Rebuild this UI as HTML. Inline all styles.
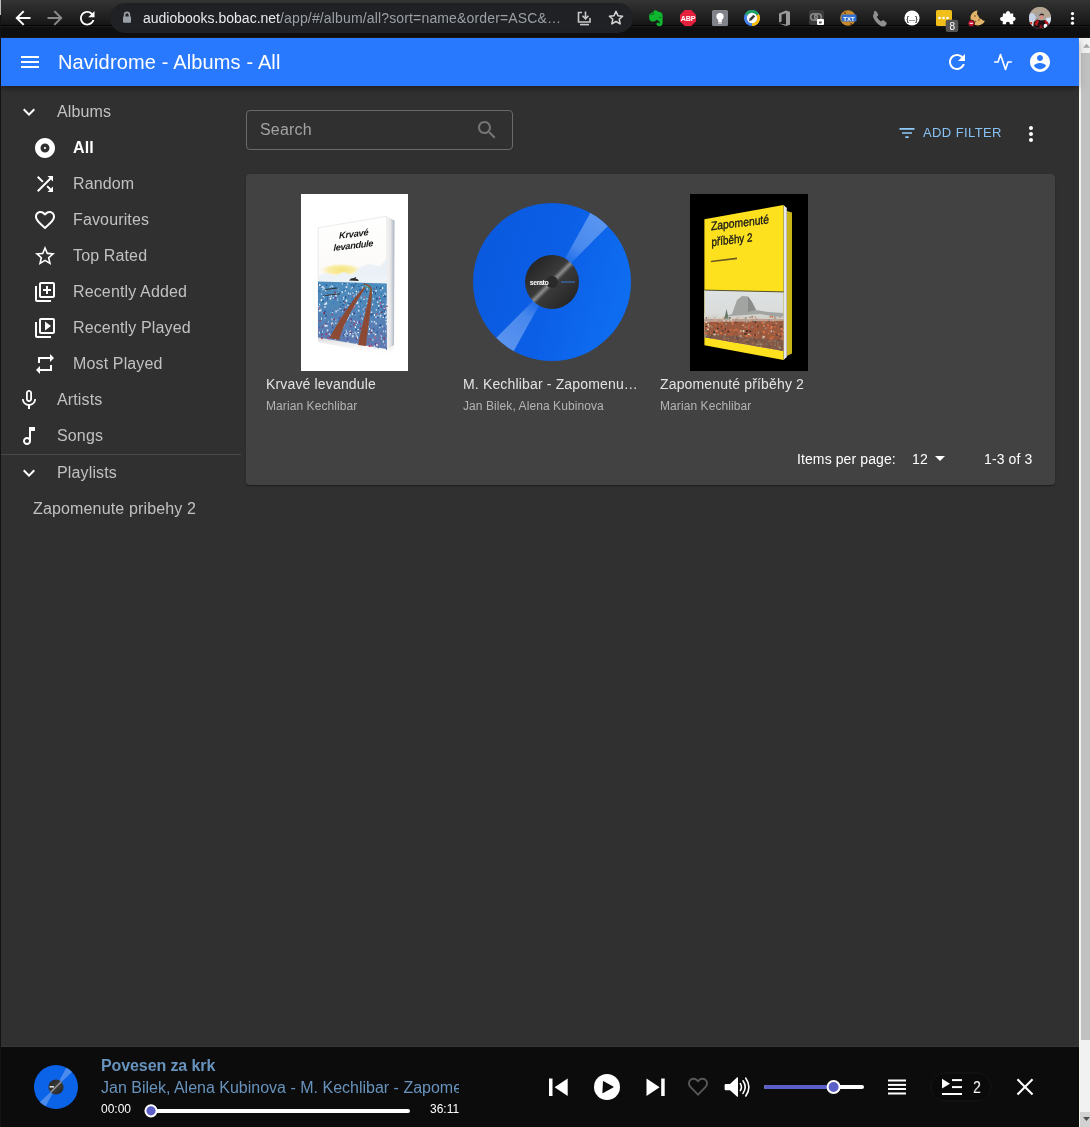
<!DOCTYPE html>
<html><head><meta charset="utf-8">
<style>
*{margin:0;padding:0;box-sizing:border-box}
html,body{width:1090px;height:1127px;overflow:hidden;background:#303030;font-family:"Liberation Sans",sans-serif}
.a{position:absolute}
.t{position:absolute;line-height:1;white-space:nowrap;will-change:transform}
svg{position:absolute;overflow:visible;will-change:transform}
#chrome{left:0;top:0;width:1090px;height:38px;background:linear-gradient(#343434 0px,#161616 25px,#040404 25px,#040404 26px,#1c1c1c 26px,#1c1c1c 27px,#0f0f0f 27px,#0f0f0f 37px,#1c160e 37px,#1c160e 38px)}
#pill{left:110px;top:3px;width:523px;height:30px;border-radius:15px;background:#202124}
#appbar{left:0;top:38px;width:1079px;height:48px;background:#2979ff;box-shadow:0px 2px 4px -1px rgba(0,0,0,0.2),0px 4px 5px 0px rgba(0,0,0,0.14),0px 1px 10px 0px rgba(0,0,0,0.12);z-index:2}
.side{color:#c1c1c1;font-size:16px;letter-spacing:0.14px}
#card{left:246px;top:174px;width:809px;height:311px;background:#424242;border-radius:4px;box-shadow:0px 2px 1px -1px rgba(0,0,0,0.2),0px 1px 1px 0px rgba(0,0,0,0.14),0px 1px 3px 0px rgba(0,0,0,0.12)}
#player{left:0;top:1047px;width:1079px;height:80px;background:#0c0c0c;border-top:0}
#sb{left:1079px;top:38px;width:11px;height:1089px;background:#f1f1f1;border-left:1px solid #fbf8f0}
</style></head><body>
<div id="chrome" class="a"></div>
<div id="pill" class="a"></div>

<!-- chrome toolbar icons -->
<svg style="left:0;top:0" width="1090" height="38" viewBox="0 0 1090 38">
<g fill="none" stroke="#fff" stroke-width="2" stroke-linecap="square">
<path d="M17.5 18H29.5M23 11.8L16.8 18L23 24.2"/>
</g>
<g fill="none" stroke="#8a8a8a" stroke-width="2" stroke-linecap="square">
<path d="M48.5 18H60.5M55 11.8L61.2 18L55 24.2"/>
</g>
<g transform="translate(76.4 7.4) scale(0.906)"><path fill="#fff" d="M17.65 6.35C16.2 4.9 14.21 4 12 4c-4.42 0-7.99 3.58-7.99 8s3.57 8 7.99 8c3.73 0 6.84-2.55 7.73-6h-2.08c-.82 2.33-3.04 4-5.650 4-3.31 0-6-2.690-6-6s2.690-6 6-6c1.66 0 3.14.69 4.22 1.78L13 11h7V4l-2.35 2.35z"/></g>
<!-- lock -->
<path fill="none" stroke="#9aa0a6" stroke-width="1.6" d="M124.6 17V14.8a2.4 2.4 0 0 1 4.8 0V17"/>
<rect x="123" y="16.4" width="8" height="6.4" rx="0.8" fill="#9aa0a6"/>
<!-- install -->
<g fill="none" stroke="#c8c8c8" stroke-width="1.6">
<path d="M582 12.5H578.5V22H590V18"/>
<path d="M585.5 11.5V18.5M582.5 15.8L585.5 18.8L588.5 15.8"/>
<path d="M580 24.6H589"/>
</g>
<!-- star -->
<path fill="none" stroke="#d8d8d8" stroke-width="1.5" stroke-linejoin="round" d="M616 11.4l2 4.3 4.6.5-3.4 3.1 1 4.6-4.2-2.4-4.2 2.4 1-4.6-3.4-3.1 4.6-.5z"/>
<!-- evernote -->
<path fill="#0fb52f" d="M653.5 11.2C654.5 10 656.5 10 657.2 11.2L660.5 12.2C661.8 12.6 662.6 13.8 662.6 15.5L662.6 23C662.6 25.5 660.5 26.3 658.8 26.1C657 25.9 656 24.5 656.6 23.3C657 22.5 658 22.3 658.6 22.8L659.5 23.8C660 23.2 659.8 22 659 21.2L657 19.8C656 20.5 655 21.5 653.5 21.6C651 21.7 649.2 20.5 649.2 18.2L649.2 15.5C649.2 14.5 649.8 13.8 650.5 13.5L652.5 12.6Z"/>
<path d="M650.3 14.6L653.6 14.4L653.2 11.6" fill="none" stroke="#0a5a1a" stroke-width="0.7"/>
<ellipse cx="660.1" cy="17.4" rx="0.8" ry="0.6" fill="#0a5a1a"/>
<!-- ABP -->
<path fill="#e3213f" d="M684.7 10h6.6l4.7 4.7v6.6l-4.7 4.7h-6.6l-4.7-4.7v-6.6z"/>
<text x="688" y="21.3" font-family="Liberation Sans" font-weight="bold" font-size="7.2" fill="#fff" text-anchor="middle" letter-spacing="-0.2">ABP</text>
<!-- lightbulb -->
<rect x="712" y="10" width="16" height="16" rx="1.5" fill="#80848a"/>
<circle cx="720" cy="16.6" r="3.6" fill="#fff"/>
<rect x="718.2" y="19.6" width="3.6" height="2.6" fill="#fff"/>
<rect x="718.2" y="22.6" width="3.6" height="1" fill="#fff"/>
<!-- google pencil -->
<circle cx="752" cy="18" r="6.6" fill="none" stroke="#4285f4" stroke-width="2.8"/>
<path d="M746.28 14.7A6.6 6.6 0 0 1 757.72 14.7" fill="none" stroke="#1ea362" stroke-width="2.8"/>
<path d="M757.72 14.7A6.6 6.6 0 0 1 752 24.6" fill="none" stroke="#fbbc04" stroke-width="2.8"/>
<circle cx="752" cy="18" r="5.2" fill="#fff"/>
<path d="M749 21l.6-2.4 3.8-3.8 1.8 1.8-3.8 3.8z" fill="#3c4043"/>
<!-- office -->
<path fill="#9a9a9a" d="M779 13.5l7-3 4 1.2v13l-4 1.3-7-2.5 7 .9V13.2l-4.4 1.2v7.2l-2.6 1z"/>
<!-- link ext -->
<rect x="809" y="10" width="15" height="15" rx="2" fill="#3a3a3a"/>
<circle cx="814" cy="17" r="3.3" fill="none" stroke="#8a8a8a" stroke-width="1.6"/>
<circle cx="818" cy="17" r="3.3" fill="none" stroke="#8a8a8a" stroke-width="1.6"/>
<rect x="817" y="19" width="7" height="6" rx="1" fill="#fff"/>
<path d="M819 21.5h3.2l-1 2h-2.2z" fill="#555"/>
<!-- cookie txt -->
<circle cx="848" cy="18" r="7.8" fill="#c98a2e"/>
<circle cx="845" cy="13" r="0.9" fill="#6b3f12"/>
<circle cx="851" cy="24" r="0.9" fill="#6b3f12"/>
<rect x="841.5" y="14.6" width="15" height="7" rx="1" fill="#2f6fcf"/>
<text x="849" y="20.6" font-family="Liberation Sans" font-weight="bold" font-size="6" fill="#fff" text-anchor="middle">TXT</text>
<!-- phone -->
<path fill="#8f8f8f" d="M874 11.5c.8-.8 1.8-.7 2.4.1l1.6 2.3c.5.7.3 1.5-.3 2l-.9.7c.6 1.8 2.4 4 4.3 4.9l.8-.8c.6-.6 1.4-.6 2-.1l2.2 1.7c.8.6.8 1.7.1 2.4l-1 1c-1 1-2.6 1.2-4.2.4-3.2-1.6-6.4-5-7.7-8.5-.5-1.5-.3-2.9.6-3.8z"/>
<!-- {..} -->
<circle cx="912" cy="18" r="7.6" fill="#fff"/>
<text x="912" y="20.5" font-family="Liberation Sans" font-weight="bold" font-size="7" fill="#3a3a3a" text-anchor="middle">{...}</text>
<!-- yellow box + badge -->
<rect x="936" y="10" width="16" height="16" rx="1.5" fill="#f0bf1a"/>
<circle cx="939.5" cy="18" r="1.3" fill="#fff"/><circle cx="943.5" cy="18" r="1.3" fill="#fff"/><circle cx="947.5" cy="18" r="1.3" fill="#fff"/>
<rect x="945.7" y="19.8" width="12.5" height="12.2" rx="2" fill="#555"/>
<text x="952.2" y="30" font-family="Liberation Sans" font-size="10" fill="#fff" text-anchor="middle">8</text>
<!-- cookie w/ red -->
<path fill="#e3b56a" d="M977.5 10.5c-4 .3-7 3.6-7 7.5 0 4.1 3.4 7.5 7.5 7.5 3.1 0 5.8-2 6.9-4.7-1.3.1-2.8-.6-3.4-1.8-1.6-.1-3-1.5-3-3.2-1.3-.5-2-1.9-1-5.3z"/>
<circle cx="975" cy="16" r="0.8" fill="#7a4a1c"/><circle cx="979" cy="20" r="0.8" fill="#7a4a1c"/><circle cx="975.5" cy="21.5" r="0.8" fill="#7a4a1c"/>
<circle cx="971.3" cy="23.3" r="3.3" fill="#c8102e" stroke="#1a1a1a" stroke-width="0.8"/>
<rect x="969.6" y="22.8" width="3.4" height="1" fill="#fff"/>
<!-- puzzle -->
<path fill="#fff" d="M1003 13.5h3c0-1.6.9-2.5 2.1-2.5s2.1.9 2.1 2.5h3v3.2c1.6 0 2.4.9 2.4 2.1s-.8 2.1-2.4 2.1v3.3h-3.3c0-1.6-.8-2.4-2-2.4s-2 .8-2 2.4h-3.2v-3.2c-1.6 0-2.6-.9-2.6-2.1s1-2.1 2.6-2.1z"/>
<!-- avatar -->
<defs><clipPath id="av"><circle cx="1040" cy="18" r="11"/></clipPath></defs>
<g clip-path="url(#av)">
<rect x="1028" y="6" width="24" height="24" fill="#a8a4a0"/>
<path d="M1028 6H1052V19L1046 18L1040 12L1032 13L1028 16z" fill="#b4a492"/>
<path d="M1028 14L1033 13L1036 17L1034 22L1028 24z" fill="#c4d0e4"/>
<path d="M1046 18L1052 17V26L1047 24z" fill="#d4e2f2"/>
<path d="M1028 22L1032 21L1033 26L1028 27z" fill="#e8e8ec"/>
<path d="M1033 30L1034 22L1037 19.5L1041 20.5L1045 20L1048.5 23L1049 30z" fill="#1e1214"/>
<path d="M1034.5 24L1037 19.5L1039 21L1037 26z" fill="#c01820"/>
<path d="M1044 20.5L1047 21L1049 25L1046 24z" fill="#c8141c"/>
<path d="M1039 28L1041 24L1043 28z" fill="#8a1218"/>
<ellipse cx="1041.5" cy="17.2" rx="2.2" ry="2.6" fill="#d49282"/>
<path d="M1039.2 16C1039.2 13 1044 12.5 1044.2 15.8C1043 14.8 1040.5 14.8 1039.2 16z" fill="#2a2224"/>
<ellipse cx="1045.5" cy="26" rx="2" ry="2.2" fill="#f0f0f4"/>
<rect x="1030" y="22" width="2" height="2.5" fill="#d83020"/>
</g>
<!-- kebab -->
<circle cx="1072.5" cy="13.6" r="1.6" fill="#fff"/><circle cx="1072.5" cy="18.4" r="1.6" fill="#fff"/><circle cx="1072.5" cy="23.2" r="1.6" fill="#fff"/>
</svg>

<div class="t" style="left:143px;top:11px;font-size:14px;color:#e8eaed">audiobooks.bobac.net<span style="color:#9aa0a6;letter-spacing:0.15px">/app/#/album/all?sort=name&amp;order=ASC&amp;…</span></div>

<div id="appbar" class="a">
<div class="t" style="left:58.3px;top:14px;font-size:20px;color:#fff;letter-spacing:0.15px">Navidrome - Albums - All</div>
</div>

<!-- sidebar -->
<div class="t side" style="left:57px;top:103.5px">Albums</div>
<div class="t side" style="left:73px;top:139.5px;color:#fff;font-weight:bold">All</div>
<div class="t side" style="left:73px;top:175.5px">Random</div>
<div class="t side" style="left:73px;top:211.5px">Favourites</div>
<div class="t side" style="left:73px;top:247.5px">Top Rated</div>
<div class="t side" style="left:73px;top:283.5px">Recently Added</div>
<div class="t side" style="left:73px;top:319.5px">Recently Played</div>
<div class="t side" style="left:73px;top:355.5px">Most Played</div>
<div class="t side" style="left:57px;top:391.5px">Artists</div>
<div class="t side" style="left:57px;top:427.5px">Songs</div>
<div class="a" style="left:0;top:454px;width:241px;height:1px;background:#494949"></div>
<div class="t side" style="left:57px;top:464.5px">Playlists</div>
<div class="t side" style="left:33px;top:500.5px;letter-spacing:0.15px">Zapomenute pribehy 2</div>

<!-- search -->
<div class="a" style="left:246px;top:110px;width:267px;height:40px;border:1px solid #6a6a6a;border-radius:4px"></div>
<div class="t" style="left:260px;top:122.3px;font-size:16px;color:#a3a3a3;letter-spacing:0.2px">Search</div>
<div class="t" style="left:923.2px;top:126.2px;font-size:13px;color:#88c2f5;letter-spacing:0.4px">ADD FILTER</div>

<div id="card" class="a"></div>

<!-- covers -->
<svg style="left:301px;top:194px" width="107" height="177" viewBox="301 194 107 177">
<defs>
<linearGradient id="sky1" x1="0" y1="0" x2="0" y2="1">
<stop offset="0" stop-color="#ffffff"/><stop offset="1" stop-color="#f6f4ee"/>
</linearGradient>
<linearGradient id="fld1" x1="0" y1="0" x2="0" y2="1">
<stop offset="0" stop-color="#4a8cbc"/><stop offset="0.35" stop-color="#4f86b8"/><stop offset="1" stop-color="#6078b0"/>
</linearGradient>
<linearGradient id="spine1" x1="0" y1="0" x2="1" y2="0"><stop offset="0" stop-color="#f7f7f7"/><stop offset="0.5" stop-color="#e4e4e6"/><stop offset="1" stop-color="#a8b4c0"/></linearGradient>
<radialGradient id="sun1" cx="0.5" cy="0.5" r="0.5"><stop offset="0" stop-color="#f7e47a"/><stop offset="0.6" stop-color="#f9eca8"/><stop offset="1" stop-color="#fbf6e0" stop-opacity="0"/></radialGradient>
<linearGradient id="shd1" x1="0" y1="0" x2="0" y2="1"><stop offset="0" stop-color="#d8d8d8"/><stop offset="1" stop-color="#fff" stop-opacity="0"/></linearGradient>
</defs>
<rect x="301" y="194" width="107" height="177" fill="#fff"/>
<path d="M318 337.5L386.8 349L394 345L394 352L386 356L318 342z" fill="url(#shd1)"/>
<path d="M386.8 216.3L394.5 220.5L394 345L386.8 349.5z" fill="url(#spine1)"/>
<path d="M318.2 227.8L386.8 216.3L386.8 349L318 337.5z" fill="url(#sky1)" stroke="#d6d6d6" stroke-width="0.5"/>
<ellipse cx="341" cy="270" rx="22" ry="7" fill="url(#sun1)"/>
<path d="M318.2 276L326 273L334 276L344 272L352 275L362 266L372 270L386.8 262V284L318.2 283z" fill="#edf2f7"/>
<path d="M360 268L368 264L380 266L386.8 258V276L360 278z" fill="#eaf0f6" opacity="0.9"/>
<path d="M318 281.6L386.8 283.4L386.8 349L318 337.5z" fill="url(#fld1)"/>
<rect x="340.3" y="292.1" width="1.5" height="0.9" fill="#2a5a9a"/>
<rect x="358.1" y="343.0" width="1.1" height="0.9" fill="#dfe8f2"/>
<rect x="324.2" y="310.4" width="1.6" height="1.7" fill="#2a5a9a"/>
<rect x="358.1" y="286.1" width="1.6" height="0.9" fill="#2a5a9a"/>
<rect x="377.1" y="301.4" width="1.3" height="1.6" fill="#dfe8f2"/>
<rect x="364.9" y="288.9" width="1.1" height="1.6" fill="#1e4a86"/>
<rect x="322.3" y="286.0" width="1.2" height="1.9" fill="#f4f6fa"/>
<rect x="342.9" y="298.6" width="0.9" height="1.2" fill="#dfe8f2"/>
<rect x="352.1" y="305.0" width="1.6" height="1.0" fill="#f4f6fa"/>
<rect x="346.8" y="332.7" width="1.1" height="2.1" fill="#c8d8ea"/>
<rect x="323.3" y="319.4" width="1.1" height="1.3" fill="#5a9ad0"/>
<rect x="352.2" y="335.4" width="1.6" height="1.5" fill="#dfe8f2"/>
<rect x="363.7" y="286.1" width="1.0" height="1.3" fill="#3a80b8"/>
<rect x="364.0" y="283.5" width="1.3" height="1.5" fill="#1e4a86"/>
<rect x="333.0" y="301.3" width="1.1" height="2.0" fill="#3a80b8"/>
<rect x="323.5" y="312.1" width="1.5" height="2.0" fill="#8a2a4a"/>
<rect x="337.2" y="309.8" width="1.6" height="1.0" fill="#c8d8ea"/>
<rect x="330.1" y="297.5" width="1.5" height="1.1" fill="#c8d8ea"/>
<rect x="337.4" y="291.8" width="1.6" height="1.8" fill="#5a9ad0"/>
<rect x="353.5" y="323.4" width="1.2" height="2.0" fill="#b0345a"/>
<rect x="383.5" y="327.6" width="1.1" height="0.9" fill="#6a3a8a"/>
<rect x="361.6" y="286.2" width="1.2" height="1.0" fill="#dfe8f2"/>
<rect x="359.3" y="288.9" width="1.6" height="1.7" fill="#2a5a9a"/>
<rect x="322.8" y="295.9" width="1.0" height="1.3" fill="#f4f6fa"/>
<rect x="343.1" y="290.2" width="1.2" height="1.2" fill="#3a80b8"/>
<rect x="327.9" y="332.2" width="1.5" height="1.0" fill="#6a3a8a"/>
<rect x="354.3" y="291.8" width="1.4" height="1.2" fill="#2a5a9a"/>
<rect x="362.2" y="288.1" width="1.5" height="1.3" fill="#5a9ad0"/>
<rect x="333.3" y="318.3" width="1.3" height="1.9" fill="#8a2a4a"/>
<rect x="370.2" y="295.1" width="1.4" height="1.1" fill="#c8d8ea"/>
<rect x="353.6" y="305.8" width="1.4" height="1.5" fill="#dfe8f2"/>
<rect x="331.3" y="322.5" width="1.6" height="2.1" fill="#f4f6fa"/>
<rect x="343.1" y="296.8" width="1.1" height="1.5" fill="#dfe8f2"/>
<rect x="385.8" y="322.9" width="1.1" height="1.7" fill="#f4f6fa"/>
<rect x="375.4" y="290.0" width="1.4" height="1.5" fill="#f4f6fa"/>
<rect x="330.3" y="334.9" width="1.1" height="1.4" fill="#f4f6fa"/>
<rect x="383.1" y="330.6" width="0.8" height="1.6" fill="#dfe8f2"/>
<rect x="350.0" y="325.9" width="1.3" height="1.3" fill="#6a3a8a"/>
<rect x="355.7" y="290.8" width="1.3" height="1.5" fill="#f4f6fa"/>
<rect x="382.2" y="311.1" width="0.8" height="1.1" fill="#1e4a86"/>
<rect x="352.5" y="333.2" width="1.1" height="1.0" fill="#f4f6fa"/>
<rect x="380.6" y="305.7" width="1.5" height="2.0" fill="#6a3a8a"/>
<rect x="327.0" y="292.2" width="1.4" height="1.7" fill="#3a80b8"/>
<rect x="371.4" y="292.0" width="1.4" height="1.6" fill="#f4f6fa"/>
<rect x="340.4" y="316.7" width="1.5" height="0.9" fill="#b0345a"/>
<rect x="331.2" y="284.8" width="1.2" height="1.9" fill="#c8d8ea"/>
<rect x="380.8" y="311.7" width="1.4" height="1.4" fill="#8a2a4a"/>
<rect x="354.7" y="314.0" width="1.5" height="2.0" fill="#5a9ad0"/>
<rect x="331.9" y="312.0" width="1.2" height="0.9" fill="#c8d8ea"/>
<rect x="334.6" y="286.9" width="1.5" height="1.0" fill="#2a5a9a"/>
<rect x="367.3" y="326.2" width="1.6" height="1.1" fill="#dfe8f2"/>
<rect x="383.5" y="308.7" width="0.9" height="1.4" fill="#8a2a4a"/>
<rect x="353.5" y="304.7" width="0.9" height="1.3" fill="#c8d8ea"/>
<rect x="341.3" y="312.7" width="1.1" height="1.7" fill="#3a80b8"/>
<rect x="353.2" y="286.3" width="1.6" height="0.9" fill="#1e4a86"/>
<rect x="336.3" y="284.7" width="1.4" height="1.9" fill="#5a9ad0"/>
<rect x="376.5" y="327.3" width="0.9" height="2.1" fill="#3a80b8"/>
<rect x="357.3" y="328.9" width="1.4" height="1.1" fill="#dfe8f2"/>
<rect x="379.6" y="300.0" width="1.4" height="0.9" fill="#dfe8f2"/>
<rect x="376.9" y="286.5" width="0.8" height="2.2" fill="#3a80b8"/>
<rect x="360.8" y="284.9" width="1.6" height="1.2" fill="#2a5a9a"/>
<rect x="361.3" y="317.6" width="1.2" height="1.0" fill="#c8d8ea"/>
<rect x="341.9" y="283.2" width="0.8" height="1.5" fill="#dfe8f2"/>
<rect x="385.3" y="316.5" width="0.9" height="1.9" fill="#c8d8ea"/>
<rect x="347.7" y="315.2" width="1.6" height="1.2" fill="#3a80b8"/>
<rect x="332.8" y="297.4" width="1.4" height="1.0" fill="#f4f6fa"/>
<rect x="386.1" y="347.8" width="0.9" height="1.8" fill="#2a5a9a"/>
<rect x="335.6" y="292.9" width="1.5" height="1.7" fill="#c8d8ea"/>
<rect x="337.4" y="298.2" width="0.9" height="1.2" fill="#c8d8ea"/>
<rect x="318.2" y="306.4" width="1.1" height="0.8" fill="#f4f6fa"/>
<rect x="378.7" y="296.6" width="1.1" height="1.5" fill="#c8d8ea"/>
<rect x="352.6" y="295.5" width="0.9" height="1.9" fill="#b0345a"/>
<rect x="327.9" y="321.3" width="1.0" height="1.1" fill="#c8d8ea"/>
<rect x="358.3" y="317.5" width="1.4" height="1.8" fill="#3a80b8"/>
<rect x="352.0" y="301.0" width="0.8" height="2.0" fill="#1e4a86"/>
<rect x="379.4" y="324.0" width="1.5" height="1.9" fill="#1e4a86"/>
<rect x="357.1" y="336.5" width="1.3" height="2.0" fill="#f4f6fa"/>
<rect x="365.0" y="328.5" width="0.8" height="1.7" fill="#dfe8f2"/>
<rect x="384.0" y="307.2" width="1.3" height="1.7" fill="#b0345a"/>
<rect x="364.8" y="314.8" width="1.4" height="1.5" fill="#dfe8f2"/>
<rect x="354.8" y="326.2" width="1.2" height="1.9" fill="#f4f6fa"/>
<rect x="376.2" y="297.7" width="1.4" height="2.2" fill="#1e4a86"/>
<rect x="352.0" y="307.6" width="1.4" height="1.7" fill="#c85a7a"/>
<rect x="362.2" y="287.2" width="1.3" height="1.8" fill="#c8d8ea"/>
<rect x="360.7" y="290.9" width="1.0" height="1.7" fill="#6a3a8a"/>
<rect x="365.6" y="327.3" width="1.0" height="1.5" fill="#f4f6fa"/>
<rect x="355.8" y="302.9" width="0.8" height="1.4" fill="#c8d8ea"/>
<rect x="374.4" y="346.9" width="1.1" height="2.1" fill="#c8d8ea"/>
<rect x="382.0" y="287.0" width="1.2" height="2.1" fill="#f4f6fa"/>
<rect x="327.1" y="337.0" width="1.4" height="1.1" fill="#b0345a"/>
<rect x="379.8" y="314.6" width="1.6" height="1.8" fill="#dfe8f2"/>
<rect x="345.9" y="330.7" width="1.1" height="2.0" fill="#c8d8ea"/>
<rect x="318.1" y="332.3" width="1.6" height="1.1" fill="#2a5a9a"/>
<rect x="318.8" y="331.6" width="1.1" height="2.2" fill="#dfe8f2"/>
<rect x="358.5" y="306.2" width="1.5" height="1.2" fill="#c8d8ea"/>
<rect x="321.6" y="326.4" width="1.0" height="1.2" fill="#8a2a4a"/>
<rect x="353.2" y="294.7" width="1.5" height="1.9" fill="#c8d8ea"/>
<rect x="361.4" y="343.2" width="1.4" height="0.9" fill="#1e4a86"/>
<rect x="368.4" y="312.2" width="1.2" height="2.1" fill="#5a9ad0"/>
<rect x="355.8" y="293.4" width="1.0" height="1.8" fill="#c8d8ea"/>
<rect x="385.2" y="299.4" width="1.2" height="1.7" fill="#5a9ad0"/>
<rect x="326.2" y="325.1" width="1.5" height="1.5" fill="#f4f6fa"/>
<rect x="386.6" y="312.1" width="1.0" height="1.0" fill="#dfe8f2"/>
<rect x="356.2" y="303.4" width="1.0" height="0.8" fill="#f4f6fa"/>
<rect x="377.9" y="307.7" width="1.1" height="1.3" fill="#1e4a86"/>
<rect x="322.3" y="300.6" width="1.3" height="1.5" fill="#1e4a86"/>
<rect x="372.4" y="338.9" width="1.1" height="1.7" fill="#dfe8f2"/>
<rect x="347.7" y="302.9" width="0.9" height="1.4" fill="#2a5a9a"/>
<rect x="370.5" y="335.9" width="0.8" height="1.3" fill="#3a80b8"/>
<rect x="381.8" y="337.3" width="1.0" height="1.0" fill="#3a80b8"/>
<rect x="328.6" y="317.0" width="0.9" height="1.9" fill="#3a80b8"/>
<rect x="318.1" y="290.4" width="1.3" height="1.2" fill="#2a5a9a"/>
<rect x="326.8" y="298.9" width="0.9" height="1.2" fill="#2a5a9a"/>
<rect x="382.9" y="294.8" width="0.8" height="1.6" fill="#f4f6fa"/>
<rect x="386.6" y="300.7" width="1.2" height="1.1" fill="#dfe8f2"/>
<rect x="366.5" y="302.6" width="1.5" height="1.7" fill="#c8d8ea"/>
<rect x="323.6" y="297.3" width="1.0" height="0.8" fill="#c8d8ea"/>
<rect x="341.3" y="310.2" width="0.8" height="1.2" fill="#1e4a86"/>
<rect x="376.1" y="286.5" width="1.0" height="1.9" fill="#1e4a86"/>
<rect x="333.9" y="296.8" width="0.9" height="1.7" fill="#5a9ad0"/>
<rect x="360.0" y="342.1" width="1.6" height="1.0" fill="#b0345a"/>
<rect x="345.1" y="296.3" width="1.1" height="1.8" fill="#1e4a86"/>
<rect x="330.7" y="312.1" width="1.4" height="2.2" fill="#5a9ad0"/>
<rect x="382.1" y="304.1" width="1.4" height="0.8" fill="#f4f6fa"/>
<rect x="363.7" y="307.4" width="1.2" height="1.0" fill="#c8d8ea"/>
<rect x="323.4" y="287.4" width="1.2" height="1.9" fill="#dfe8f2"/>
<rect x="344.2" y="333.5" width="0.9" height="1.8" fill="#c8d8ea"/>
<rect x="331.5" y="318.3" width="1.1" height="2.1" fill="#c8d8ea"/>
<rect x="320.1" y="309.5" width="0.8" height="0.8" fill="#3a80b8"/>
<rect x="335.7" y="332.1" width="1.1" height="1.3" fill="#5a9ad0"/>
<rect x="383.6" y="284.9" width="1.5" height="1.2" fill="#5a9ad0"/>
<rect x="367.6" y="321.9" width="0.8" height="1.1" fill="#2a5a9a"/>
<rect x="383.6" y="307.9" width="1.5" height="1.0" fill="#c8d8ea"/>
<rect x="382.1" y="302.3" width="1.3" height="1.3" fill="#1e4a86"/>
<rect x="340.0" y="306.2" width="1.2" height="1.3" fill="#2a5a9a"/>
<rect x="329.0" y="309.3" width="1.2" height="1.3" fill="#3a80b8"/>
<rect x="385.4" y="341.2" width="1.3" height="1.1" fill="#5a9ad0"/>
<rect x="384.9" y="293.6" width="1.3" height="1.7" fill="#c8d8ea"/>
<rect x="369.5" y="338.7" width="1.4" height="1.2" fill="#b0345a"/>
<rect x="337.2" y="299.9" width="1.0" height="1.1" fill="#c8d8ea"/>
<rect x="334.9" y="292.3" width="1.1" height="1.4" fill="#1e4a86"/>
<rect x="386.3" y="316.0" width="1.3" height="2.2" fill="#dfe8f2"/>
<rect x="325.0" y="313.8" width="1.5" height="0.9" fill="#3a80b8"/>
<rect x="338.2" y="290.0" width="1.0" height="0.9" fill="#f4f6fa"/>
<rect x="353.3" y="293.9" width="0.9" height="1.6" fill="#2a5a9a"/>
<rect x="360.7" y="296.6" width="0.8" height="2.2" fill="#dfe8f2"/>
<rect x="320.6" y="331.1" width="1.5" height="1.4" fill="#2a5a9a"/>
<rect x="343.6" y="323.6" width="1.4" height="1.6" fill="#dfe8f2"/>
<rect x="322.4" y="288.8" width="0.9" height="1.5" fill="#f4f6fa"/>
<rect x="362.9" y="308.7" width="1.3" height="1.4" fill="#c8d8ea"/>
<rect x="321.5" y="331.9" width="1.1" height="2.0" fill="#3a80b8"/>
<rect x="386.6" y="306.4" width="1.1" height="2.1" fill="#f4f6fa"/>
<rect x="347.9" y="292.5" width="1.1" height="2.0" fill="#dfe8f2"/>
<rect x="349.7" y="292.9" width="0.9" height="1.9" fill="#f4f6fa"/>
<rect x="345.3" y="320.4" width="0.9" height="1.2" fill="#1e4a86"/>
<rect x="325.5" y="314.9" width="1.0" height="2.0" fill="#1e4a86"/>
<rect x="339.6" y="322.7" width="1.5" height="1.7" fill="#b0345a"/>
<rect x="374.7" y="292.7" width="1.3" height="1.7" fill="#1e4a86"/>
<rect x="331.5" y="313.7" width="1.1" height="1.5" fill="#b0345a"/>
<rect x="344.4" y="290.2" width="1.5" height="1.1" fill="#f4f6fa"/>
<rect x="378.8" y="338.4" width="0.9" height="1.6" fill="#c85a7a"/>
<rect x="355.8" y="324.0" width="1.0" height="1.1" fill="#c8d8ea"/>
<rect x="344.8" y="306.6" width="0.8" height="1.7" fill="#8a2a4a"/>
<rect x="351.7" y="297.8" width="1.5" height="1.9" fill="#3a80b8"/>
<rect x="345.5" y="286.5" width="0.9" height="1.4" fill="#c8d8ea"/>
<rect x="353.1" y="284.7" width="1.5" height="1.2" fill="#2a5a9a"/>
<rect x="367.6" y="287.4" width="1.3" height="1.9" fill="#3a80b8"/>
<rect x="319.8" y="286.4" width="1.0" height="2.2" fill="#2a5a9a"/>
<rect x="381.0" y="293.1" width="0.9" height="1.3" fill="#1e4a86"/>
<rect x="370.0" y="292.6" width="1.5" height="1.4" fill="#5a9ad0"/>
<rect x="351.0" y="321.7" width="1.1" height="0.9" fill="#8a2a4a"/>
<rect x="330.5" y="292.8" width="1.5" height="1.0" fill="#5a9ad0"/>
<rect x="372.0" y="289.7" width="1.6" height="1.4" fill="#5a9ad0"/>
<rect x="353.9" y="328.1" width="1.6" height="1.7" fill="#5a9ad0"/>
<rect x="345.1" y="335.4" width="1.3" height="1.3" fill="#c8d8ea"/>
<rect x="370.6" y="311.6" width="1.6" height="1.2" fill="#f4f6fa"/>
<rect x="353.5" y="302.8" width="1.4" height="1.8" fill="#5a9ad0"/>
<rect x="333.2" y="301.5" width="1.2" height="2.1" fill="#3a80b8"/>
<rect x="327.1" y="297.2" width="0.8" height="1.6" fill="#2a5a9a"/>
<rect x="338.9" y="317.0" width="1.3" height="1.6" fill="#6a3a8a"/>
<rect x="332.0" y="323.8" width="0.8" height="1.9" fill="#8a2a4a"/>
<rect x="366.7" y="312.2" width="1.5" height="1.9" fill="#dfe8f2"/>
<rect x="345.7" y="299.7" width="1.5" height="2.0" fill="#f4f6fa"/>
<rect x="358.9" y="320.8" width="1.0" height="2.1" fill="#6a3a8a"/>
<rect x="321.0" y="317.6" width="0.9" height="2.1" fill="#dfe8f2"/>
<rect x="325.2" y="323.0" width="0.9" height="1.1" fill="#8a2a4a"/>
<rect x="359.8" y="316.0" width="1.2" height="0.9" fill="#8a2a4a"/>
<rect x="367.8" y="314.0" width="1.5" height="1.8" fill="#6a3a8a"/>
<rect x="350.0" y="331.7" width="1.6" height="1.2" fill="#8a2a4a"/>
<rect x="362.3" y="290.3" width="1.4" height="1.2" fill="#5a9ad0"/>
<rect x="356.1" y="311.2" width="1.0" height="2.1" fill="#5a9ad0"/>
<rect x="379.5" y="287.7" width="1.0" height="1.1" fill="#1e4a86"/>
<rect x="369.2" y="345.3" width="1.0" height="1.3" fill="#c85a7a"/>
<rect x="359.4" y="307.4" width="1.2" height="1.5" fill="#3a80b8"/>
<rect x="318.4" y="283.8" width="1.3" height="1.2" fill="#1e4a86"/>
<rect x="332.6" y="323.7" width="0.9" height="0.8" fill="#dfe8f2"/>
<rect x="341.7" y="291.5" width="0.9" height="1.7" fill="#dfe8f2"/>
<rect x="320.9" y="286.5" width="1.4" height="1.1" fill="#f4f6fa"/>
<rect x="383.7" y="317.8" width="0.9" height="1.1" fill="#3a80b8"/>
<rect x="325.7" y="284.3" width="1.5" height="1.7" fill="#2a5a9a"/>
<rect x="337.8" y="288.7" width="1.0" height="1.2" fill="#f4f6fa"/>
<rect x="347.2" y="283.4" width="0.8" height="1.9" fill="#c8d8ea"/>
<rect x="380.6" y="333.5" width="1.5" height="1.7" fill="#6a3a8a"/>
<rect x="320.1" y="309.7" width="1.1" height="1.8" fill="#dfe8f2"/>
<rect x="355.0" y="296.5" width="1.3" height="1.2" fill="#2a5a9a"/>
<rect x="348.0" y="317.1" width="0.8" height="1.5" fill="#dfe8f2"/>
<rect x="351.8" y="335.4" width="1.3" height="2.1" fill="#c8d8ea"/>
<rect x="353.4" y="320.7" width="1.6" height="1.1" fill="#dfe8f2"/>
<rect x="370.8" y="314.8" width="1.3" height="1.3" fill="#2a5a9a"/>
<rect x="345.6" y="308.4" width="1.1" height="1.7" fill="#2a5a9a"/>
<rect x="343.6" y="302.3" width="1.2" height="1.3" fill="#f4f6fa"/>
<rect x="378.8" y="297.6" width="1.1" height="1.3" fill="#b0345a"/>
<rect x="328.7" y="338.5" width="0.9" height="1.4" fill="#c85a7a"/>
<rect x="371.2" y="320.8" width="1.3" height="1.8" fill="#c8d8ea"/>
<rect x="352.9" y="299.9" width="1.4" height="2.2" fill="#1e4a86"/>
<rect x="367.8" y="322.4" width="1.1" height="1.1" fill="#dfe8f2"/>
<rect x="385.1" y="330.8" width="0.9" height="1.3" fill="#f4f6fa"/>
<rect x="385.7" y="335.3" width="1.0" height="1.0" fill="#6a3a8a"/>
<rect x="380.7" y="300.8" width="0.8" height="1.4" fill="#3a80b8"/>
<rect x="372.4" y="328.5" width="1.2" height="1.0" fill="#c85a7a"/>
<rect x="359.5" y="309.1" width="1.4" height="1.6" fill="#3a80b8"/>
<rect x="362.5" y="338.7" width="1.3" height="1.7" fill="#8a2a4a"/>
<rect x="349.2" y="303.0" width="1.5" height="1.1" fill="#2a5a9a"/>
<rect x="345.5" y="329.7" width="1.2" height="0.8" fill="#c8d8ea"/>
<rect x="377.1" y="316.7" width="1.5" height="1.3" fill="#1e4a86"/>
<rect x="380.5" y="289.1" width="0.9" height="1.9" fill="#dfe8f2"/>
<rect x="382.7" y="316.8" width="1.2" height="1.1" fill="#f4f6fa"/>
<rect x="350.7" y="283.1" width="1.2" height="1.4" fill="#5a9ad0"/>
<rect x="383.2" y="296.1" width="1.2" height="2.1" fill="#3a80b8"/>
<rect x="368.2" y="323.1" width="1.0" height="1.4" fill="#c85a7a"/>
<rect x="318.9" y="310.0" width="1.3" height="1.6" fill="#f4f6fa"/>
<rect x="325.5" y="302.3" width="1.6" height="2.2" fill="#f4f6fa"/>
<rect x="384.1" y="313.0" width="1.4" height="1.7" fill="#dfe8f2"/>
<rect x="350.3" y="319.7" width="1.1" height="1.7" fill="#dfe8f2"/>
<rect x="374.3" y="336.7" width="1.4" height="1.7" fill="#c85a7a"/>
<rect x="371.7" y="313.4" width="1.0" height="1.3" fill="#1e4a86"/>
<rect x="335.4" y="310.5" width="1.4" height="1.9" fill="#dfe8f2"/>
<rect x="342.6" y="325.8" width="1.1" height="1.7" fill="#c8d8ea"/>
<rect x="363.4" y="306.3" width="0.8" height="2.0" fill="#3a80b8"/>
<rect x="380.3" y="334.5" width="1.3" height="0.8" fill="#c8d8ea"/>
<rect x="363.1" y="298.8" width="1.5" height="1.1" fill="#dfe8f2"/>
<rect x="349.1" y="334.6" width="1.4" height="1.0" fill="#c8d8ea"/>
<rect x="379.3" y="322.8" width="1.0" height="1.8" fill="#5a9ad0"/>
<rect x="354.5" y="331.7" width="1.2" height="1.2" fill="#dfe8f2"/>
<rect x="334.1" y="291.3" width="1.2" height="2.1" fill="#b0345a"/>
<rect x="366.2" y="298.5" width="1.5" height="0.8" fill="#f4f6fa"/>
<rect x="375.8" y="313.4" width="1.5" height="1.3" fill="#c85a7a"/>
<rect x="323.2" y="324.7" width="0.8" height="0.9" fill="#b0345a"/>
<rect x="373.6" y="288.3" width="0.8" height="1.8" fill="#8a2a4a"/>
<rect x="361.0" y="304.7" width="1.1" height="1.9" fill="#5a9ad0"/>
<rect x="356.1" y="343.1" width="1.1" height="1.6" fill="#c8d8ea"/>
<rect x="374.9" y="301.6" width="1.1" height="2.2" fill="#3a80b8"/>
<rect x="378.1" y="305.1" width="1.4" height="1.3" fill="#c8d8ea"/>
<rect x="339.8" y="302.0" width="1.4" height="0.9" fill="#2a5a9a"/>
<rect x="367.7" y="341.3" width="1.1" height="1.0" fill="#b0345a"/>
<rect x="321.2" y="337.1" width="1.4" height="2.1" fill="#b0345a"/>
<rect x="360.1" y="323.3" width="1.0" height="1.7" fill="#b0345a"/>
<rect x="349.5" y="333.1" width="1.5" height="1.4" fill="#dfe8f2"/>
<rect x="327.5" y="302.7" width="0.9" height="0.8" fill="#5a9ad0"/>
<rect x="319.4" y="319.9" width="1.2" height="1.5" fill="#b0345a"/>
<rect x="374.7" y="333.8" width="1.5" height="1.4" fill="#f4f6fa"/>
<rect x="319.0" y="307.9" width="1.2" height="1.4" fill="#8a2a4a"/>
<rect x="325.0" y="325.2" width="1.3" height="1.4" fill="#dfe8f2"/>
<rect x="318.6" y="326.8" width="1.0" height="1.0" fill="#2a5a9a"/>
<rect x="350.5" y="300.5" width="1.4" height="1.1" fill="#3a80b8"/>
<rect x="321.4" y="333.9" width="1.4" height="0.9" fill="#8a2a4a"/>
<rect x="361.2" y="329.5" width="1.5" height="0.9" fill="#c85a7a"/>
<rect x="320.2" y="286.1" width="1.1" height="1.2" fill="#2a5a9a"/>
<rect x="375.4" y="322.8" width="1.4" height="1.5" fill="#f4f6fa"/>
<rect x="329.3" y="335.7" width="1.6" height="1.9" fill="#6a3a8a"/>
<rect x="357.0" y="301.6" width="1.4" height="2.0" fill="#f4f6fa"/>
<rect x="340.8" y="322.6" width="1.3" height="1.2" fill="#1e4a86"/>
<rect x="347.5" y="341.5" width="1.1" height="1.9" fill="#f4f6fa"/>
<rect x="334.1" y="312.2" width="1.0" height="1.4" fill="#5a9ad0"/>
<rect x="358.4" y="336.7" width="1.0" height="1.0" fill="#2a5a9a"/>
<rect x="372.9" y="318.7" width="1.1" height="0.9" fill="#3a80b8"/>
<rect x="356.1" y="335.4" width="1.5" height="1.1" fill="#f4f6fa"/>
<rect x="359.8" y="327.4" width="1.5" height="1.6" fill="#8a2a4a"/>
<rect x="318.6" y="307.8" width="1.4" height="1.1" fill="#c85a7a"/>
<rect x="357.9" y="342.1" width="1.2" height="1.6" fill="#5a9ad0"/>
<rect x="331.0" y="294.9" width="1.0" height="1.6" fill="#f4f6fa"/>
<rect x="342.7" y="334.2" width="0.8" height="2.2" fill="#1e4a86"/>
<rect x="343.7" y="289.1" width="0.9" height="1.6" fill="#2a5a9a"/>
<rect x="341.7" y="316.8" width="1.0" height="2.0" fill="#dfe8f2"/>
<rect x="356.9" y="321.3" width="1.1" height="2.1" fill="#c8d8ea"/>
<rect x="370.8" y="336.9" width="1.5" height="1.3" fill="#5a9ad0"/>
<rect x="386.4" y="307.3" width="1.2" height="2.0" fill="#dfe8f2"/>
<rect x="380.6" y="286.3" width="1.5" height="1.8" fill="#3a80b8"/>
<rect x="324.2" y="303.4" width="1.6" height="1.7" fill="#dfe8f2"/>
<rect x="345.0" y="312.0" width="1.6" height="1.1" fill="#dfe8f2"/>
<rect x="320.7" y="299.1" width="1.5" height="2.0" fill="#f4f6fa"/>
<rect x="321.2" y="334.7" width="0.8" height="1.0" fill="#6a3a8a"/>
<rect x="369.9" y="344.9" width="1.3" height="1.4" fill="#c85a7a"/>
<rect x="362.9" y="313.5" width="0.9" height="1.5" fill="#c8d8ea"/>
<rect x="329.6" y="298.0" width="1.5" height="1.5" fill="#f4f6fa"/>
<rect x="380.8" y="335.5" width="0.9" height="1.7" fill="#dfe8f2"/>
<rect x="343.7" y="332.2" width="1.5" height="1.3" fill="#2a5a9a"/>
<rect x="319.5" y="287.0" width="1.5" height="1.5" fill="#5a9ad0"/>
<rect x="361.2" y="291.6" width="0.9" height="1.4" fill="#dfe8f2"/>
<rect x="379.2" y="311.4" width="1.1" height="1.0" fill="#c8d8ea"/>
<rect x="336.7" y="338.3" width="1.0" height="1.0" fill="#dfe8f2"/>
<rect x="349.4" y="314.3" width="0.8" height="2.1" fill="#f4f6fa"/>
<rect x="364.0" y="296.1" width="0.9" height="1.9" fill="#c85a7a"/>
<rect x="384.8" y="310.9" width="1.5" height="0.9" fill="#dfe8f2"/>
<rect x="322.0" y="330.7" width="0.8" height="1.9" fill="#f4f6fa"/>
<rect x="341.5" y="291.4" width="1.0" height="1.3" fill="#f4f6fa"/>
<rect x="320.8" y="309.4" width="0.9" height="1.1" fill="#dfe8f2"/>
<rect x="371.0" y="329.7" width="1.5" height="2.0" fill="#dfe8f2"/>
<rect x="368.3" y="333.0" width="1.3" height="1.8" fill="#dfe8f2"/>
<rect x="373.8" y="321.1" width="1.4" height="1.5" fill="#dfe8f2"/>
<rect x="375.9" y="343.4" width="1.1" height="2.0" fill="#c85a7a"/>
<rect x="377.5" y="315.0" width="0.9" height="1.7" fill="#c8d8ea"/>
<rect x="335.1" y="319.7" width="0.9" height="1.3" fill="#2a5a9a"/>
<rect x="353.8" y="311.9" width="1.1" height="1.1" fill="#b0345a"/>
<rect x="375.1" y="343.1" width="1.3" height="2.1" fill="#6a3a8a"/>
<rect x="338.1" y="289.2" width="1.2" height="1.5" fill="#3a80b8"/>
<rect x="355.0" y="283.4" width="1.3" height="1.0" fill="#1e4a86"/>
<rect x="339.5" y="319.2" width="0.9" height="1.8" fill="#2a5a9a"/>
<rect x="331.4" y="283.2" width="1.2" height="1.8" fill="#3a80b8"/>
<rect x="367.3" y="285.0" width="1.3" height="1.9" fill="#c8d8ea"/>
<rect x="325.6" y="290.1" width="1.5" height="1.0" fill="#1e4a86"/>
<rect x="357.4" y="332.0" width="1.6" height="1.3" fill="#dfe8f2"/>
<rect x="346.9" y="338.3" width="1.6" height="0.9" fill="#6a3a8a"/>
<rect x="343.0" y="308.8" width="1.5" height="1.6" fill="#3a80b8"/>
<rect x="385.8" y="303.5" width="0.8" height="1.5" fill="#f4f6fa"/>
<rect x="383.9" y="344.6" width="1.3" height="0.8" fill="#c8d8ea"/>
<rect x="325.5" y="294.6" width="1.2" height="0.8" fill="#dfe8f2"/>
<rect x="371.4" y="344.8" width="0.8" height="1.7" fill="#b0345a"/>
<rect x="336.3" y="327.5" width="1.4" height="0.9" fill="#f4f6fa"/>
<rect x="324.9" y="290.2" width="1.6" height="1.2" fill="#dfe8f2"/>
<rect x="339.0" y="325.4" width="1.6" height="2.1" fill="#f4f6fa"/>
<rect x="380.0" y="287.7" width="1.2" height="1.5" fill="#1e4a86"/>
<rect x="378.9" y="343.3" width="1.0" height="0.9" fill="#c85a7a"/>
<rect x="355.6" y="338.3" width="1.3" height="1.1" fill="#8a2a4a"/>
<rect x="366.9" y="312.9" width="1.2" height="1.2" fill="#6a3a8a"/>
<rect x="334.7" y="296.8" width="1.6" height="1.4" fill="#6a3a8a"/>
<rect x="381.6" y="292.9" width="1.2" height="1.5" fill="#5a9ad0"/>
<rect x="338.3" y="333.7" width="1.3" height="1.3" fill="#dfe8f2"/>
<rect x="363.3" y="316.6" width="1.4" height="1.0" fill="#5a9ad0"/>
<rect x="368.8" y="292.4" width="0.9" height="1.1" fill="#c8d8ea"/>
<rect x="360.0" y="300.5" width="1.4" height="1.8" fill="#2a5a9a"/>
<rect x="370.3" y="313.8" width="1.1" height="0.9" fill="#1e4a86"/>
<rect x="346.2" y="318.8" width="1.6" height="1.6" fill="#c8d8ea"/>
<rect x="346.8" y="334.5" width="1.1" height="1.4" fill="#2a5a9a"/>
<rect x="349.5" y="330.4" width="1.2" height="1.6" fill="#c8d8ea"/>
<rect x="344.2" y="302.1" width="1.1" height="1.3" fill="#8a2a4a"/>
<rect x="334.0" y="337.0" width="1.5" height="2.1" fill="#f4f6fa"/>
<rect x="332.1" y="310.6" width="0.8" height="1.2" fill="#2a5a9a"/>
<rect x="379.6" y="302.1" width="1.2" height="2.2" fill="#c85a7a"/>
<rect x="353.6" y="316.7" width="1.2" height="0.9" fill="#3a80b8"/>
<rect x="364.5" y="312.4" width="1.2" height="0.9" fill="#dfe8f2"/>
<rect x="343.8" y="308.9" width="1.5" height="2.2" fill="#8a2a4a"/>
<rect x="351.5" y="311.5" width="1.4" height="1.8" fill="#5a9ad0"/>
<rect x="324.3" y="306.3" width="1.5" height="1.5" fill="#dfe8f2"/>
<rect x="365.5" y="337.0" width="1.3" height="1.5" fill="#3a80b8"/>
<rect x="374.2" y="295.9" width="0.9" height="1.7" fill="#3a80b8"/>
<rect x="359.5" y="305.7" width="1.4" height="0.8" fill="#2a5a9a"/>
<rect x="318.2" y="329.6" width="1.1" height="0.9" fill="#c85a7a"/>
<rect x="319.1" y="284.0" width="1.3" height="2.0" fill="#f4f6fa"/>
<rect x="379.6" y="316.5" width="1.1" height="1.0" fill="#dfe8f2"/>
<rect x="328.8" y="332.9" width="0.9" height="2.1" fill="#dfe8f2"/>
<rect x="351.7" y="313.3" width="1.3" height="1.8" fill="#dfe8f2"/>
<rect x="357.8" y="291.6" width="0.9" height="1.2" fill="#c8d8ea"/>
<rect x="358.1" y="305.4" width="0.8" height="1.1" fill="#c8d8ea"/>
<rect x="345.2" y="333.2" width="1.3" height="1.1" fill="#dfe8f2"/>
<rect x="376.8" y="303.1" width="1.0" height="1.6" fill="#3a80b8"/>
<rect x="384.0" y="315.2" width="1.3" height="1.7" fill="#1e4a86"/>
<rect x="358.2" y="309.7" width="1.2" height="1.9" fill="#f4f6fa"/>
<rect x="334.7" y="293.6" width="0.8" height="2.0" fill="#dfe8f2"/>
<rect x="345.2" y="306.3" width="1.1" height="1.7" fill="#c8d8ea"/>
<rect x="384.1" y="310.3" width="1.1" height="1.5" fill="#1e4a86"/>
<rect x="341.7" y="311.2" width="1.1" height="1.0" fill="#dfe8f2"/>
<rect x="366.6" y="288.2" width="1.2" height="1.5" fill="#dfe8f2"/>
<rect x="372.7" y="298.1" width="1.4" height="1.3" fill="#dfe8f2"/>
<rect x="383.9" y="295.9" width="1.0" height="1.4" fill="#1e4a86"/>
<rect x="327.0" y="329.3" width="1.3" height="1.3" fill="#c8d8ea"/>
<rect x="334.9" y="322.7" width="1.3" height="0.9" fill="#dfe8f2"/>
<rect x="376.6" y="331.3" width="1.3" height="1.6" fill="#2a5a9a"/>
<rect x="339.4" y="308.1" width="1.4" height="1.1" fill="#dfe8f2"/>
<rect x="373.4" y="332.8" width="1.0" height="1.1" fill="#f4f6fa"/>
<rect x="326.7" y="330.0" width="1.5" height="1.5" fill="#c8d8ea"/>
<rect x="361.2" y="324.1" width="0.9" height="1.3" fill="#5a9ad0"/>
<rect x="373.0" y="328.3" width="1.3" height="1.8" fill="#2a5a9a"/>
<rect x="335.1" y="338.7" width="0.9" height="1.2" fill="#f4f6fa"/>
<rect x="336.6" y="322.8" width="0.8" height="0.9" fill="#f4f6fa"/>
<rect x="329.1" y="295.3" width="1.4" height="1.6" fill="#c8d8ea"/>
<rect x="356.8" y="297.3" width="1.5" height="1.7" fill="#c85a7a"/>
<rect x="325.7" y="333.2" width="1.5" height="1.6" fill="#b0345a"/>
<rect x="364.9" y="284.5" width="1.4" height="0.9" fill="#c8d8ea"/>
<rect x="365.8" y="308.4" width="1.0" height="0.9" fill="#1e4a86"/>
<rect x="383.1" y="310.4" width="1.2" height="1.7" fill="#3a80b8"/>
<rect x="332.2" y="327.1" width="1.2" height="1.1" fill="#1e4a86"/>
<rect x="383.5" y="337.3" width="1.2" height="2.2" fill="#8a2a4a"/>
<rect x="361.9" y="318.4" width="0.9" height="1.3" fill="#dfe8f2"/>
<rect x="324.4" y="324.6" width="1.4" height="1.7" fill="#f4f6fa"/>
<rect x="334.4" y="298.2" width="0.9" height="1.7" fill="#6a3a8a"/>
<rect x="366.0" y="290.9" width="1.1" height="1.9" fill="#1e4a86"/>
<rect x="355.7" y="333.0" width="0.9" height="2.2" fill="#f4f6fa"/>
<rect x="375.8" y="309.2" width="1.0" height="1.3" fill="#f4f6fa"/>
<rect x="332.2" y="286.0" width="0.9" height="1.2" fill="#dfe8f2"/>
<rect x="384.2" y="292.8" width="1.1" height="1.0" fill="#f4f6fa"/>
<rect x="322.9" y="282.7" width="0.9" height="1.8" fill="#3a80b8"/>
<rect x="385.4" y="319.8" width="1.6" height="1.5" fill="#c8d8ea"/>
<rect x="371.9" y="303.6" width="1.3" height="1.7" fill="#dfe8f2"/>
<rect x="382.3" y="325.7" width="0.9" height="1.8" fill="#dfe8f2"/>
<rect x="319.7" y="308.5" width="0.9" height="1.7" fill="#c8d8ea"/>
<rect x="376.2" y="344.1" width="1.5" height="1.8" fill="#f4f6fa"/>
<rect x="340.5" y="294.4" width="1.0" height="1.0" fill="#5a9ad0"/>
<rect x="381.3" y="338.1" width="0.8" height="1.6" fill="#dfe8f2"/>
<rect x="361.2" y="336.9" width="1.6" height="1.5" fill="#b0345a"/>
<rect x="352.4" y="292.6" width="1.3" height="1.0" fill="#f4f6fa"/>
<rect x="333.7" y="291.3" width="0.9" height="0.9" fill="#3a80b8"/>
<rect x="348.2" y="294.8" width="0.8" height="1.7" fill="#2a5a9a"/>
<rect x="375.3" y="316.3" width="1.3" height="1.5" fill="#dfe8f2"/>
<rect x="347.0" y="304.7" width="1.6" height="1.0" fill="#f4f6fa"/>
<rect x="367.9" y="307.4" width="1.3" height="1.6" fill="#f4f6fa"/>
<rect x="350.3" y="318.4" width="1.6" height="2.1" fill="#6a3a8a"/>
<rect x="377.5" y="347.3" width="1.4" height="0.9" fill="#2a5a9a"/>
<rect x="364.5" y="322.8" width="1.1" height="1.3" fill="#f4f6fa"/>
<rect x="363.2" y="291.2" width="1.5" height="1.1" fill="#2a5a9a"/>
<rect x="368.9" y="328.3" width="1.1" height="1.6" fill="#f4f6fa"/>
<rect x="346.6" y="317.5" width="1.0" height="1.1" fill="#6a3a8a"/>
<rect x="384.6" y="295.6" width="1.5" height="1.2" fill="#1e4a86"/>
<rect x="324.5" y="317.6" width="1.0" height="1.4" fill="#c8d8ea"/>
<rect x="355.2" y="328.7" width="1.5" height="1.8" fill="#2a5a9a"/>
<rect x="373.1" y="291.0" width="1.3" height="2.1" fill="#2a5a9a"/>
<rect x="353.4" y="312.8" width="1.6" height="1.1" fill="#1e4a86"/>
<rect x="350.7" y="288.2" width="0.8" height="1.1" fill="#f4f6fa"/>
<rect x="343.6" y="283.0" width="1.2" height="1.0" fill="#1e4a86"/>
<rect x="331.9" y="289.7" width="0.9" height="1.8" fill="#5a9ad0"/>
<rect x="341.5" y="333.2" width="0.9" height="1.3" fill="#c85a7a"/>
<rect x="368.7" y="345.5" width="1.5" height="1.3" fill="#b0345a"/>
<rect x="342.5" y="303.9" width="1.5" height="1.7" fill="#2a5a9a"/>
<rect x="335.5" y="294.9" width="1.2" height="1.9" fill="#f4f6fa"/>
<rect x="351.6" y="286.9" width="1.2" height="1.2" fill="#dfe8f2"/>
<rect x="365.3" y="307.5" width="1.2" height="1.8" fill="#c8d8ea"/>
<rect x="373.6" y="345.6" width="1.6" height="1.5" fill="#c8d8ea"/>
<rect x="351.3" y="284.1" width="0.9" height="1.9" fill="#2a5a9a"/>
<rect x="364.8" y="308.3" width="1.4" height="1.4" fill="#8a2a4a"/>
<rect x="353.6" y="306.2" width="1.5" height="1.6" fill="#c85a7a"/>
<rect x="321.0" y="293.4" width="1.1" height="1.5" fill="#c8d8ea"/>
<rect x="382.5" y="303.1" width="1.1" height="0.8" fill="#c8d8ea"/>
<rect x="321.1" y="291.8" width="1.1" height="0.9" fill="#5a9ad0"/>
<rect x="386.2" y="305.9" width="1.6" height="0.8" fill="#8a2a4a"/>
<rect x="356.6" y="333.7" width="1.3" height="1.7" fill="#3a80b8"/>
<rect x="343.0" y="300.9" width="1.3" height="1.2" fill="#1e4a86"/>
<rect x="370.5" y="331.5" width="1.1" height="1.6" fill="#8a2a4a"/>
<rect x="345.9" y="286.1" width="1.5" height="1.9" fill="#c8d8ea"/>
<rect x="352.7" y="341.9" width="0.9" height="1.1" fill="#5a9ad0"/>
<rect x="379.1" y="327.0" width="1.3" height="1.2" fill="#c8d8ea"/>
<rect x="329.6" y="286.4" width="1.0" height="1.6" fill="#c8d8ea"/>
<rect x="323.1" y="294.7" width="1.0" height="1.3" fill="#1e4a86"/>
<rect x="365.5" y="330.3" width="1.1" height="1.0" fill="#3a80b8"/>
<rect x="379.8" y="318.6" width="1.0" height="0.8" fill="#5a9ad0"/>
<rect x="321.3" y="312.0" width="1.5" height="1.7" fill="#5a9ad0"/>
<rect x="331.5" y="331.2" width="0.9" height="1.9" fill="#2a5a9a"/>
<rect x="378.2" y="304.9" width="1.0" height="1.7" fill="#dfe8f2"/>
<rect x="319.0" y="303.6" width="1.1" height="1.8" fill="#c8d8ea"/>
<rect x="362.6" y="309.2" width="0.9" height="2.0" fill="#5a9ad0"/>
<rect x="372.8" y="287.8" width="1.6" height="1.4" fill="#3a80b8"/>
<rect x="382.7" y="340.5" width="1.3" height="2.2" fill="#c8d8ea"/>
<rect x="321.9" y="323.1" width="0.9" height="0.8" fill="#5a9ad0"/>
<rect x="332.5" y="317.5" width="1.5" height="1.4" fill="#5a9ad0"/>
<rect x="355.1" y="321.4" width="1.0" height="1.7" fill="#c85a7a"/>
<rect x="374.0" y="314.0" width="1.0" height="1.9" fill="#f4f6fa"/>
<rect x="385.2" y="312.4" width="1.2" height="1.2" fill="#f4f6fa"/>
<rect x="335.4" y="319.4" width="0.9" height="1.7" fill="#c8d8ea"/>
<path d="M329.5 338C338 322 352 300 364 287L365.6 287.4C356 302 344 322 339 340z" fill="#8c4a34"/>
<path d="M358 345C362 325 368 305 370 289C369 286 366 285 363 284.3L364 283.5C368 284 372 286 372 290C372 306 368 326 366 346z" fill="#8c4a34"/>
<path d="M363.5 286C368 286 371 288 371 291" stroke="#4a9a50" stroke-width="0.6" fill="none"/>
<path d="M349 280.5l2-2 3-0.5 1.5-1 .8.8-1 .8 2.5 .6 1 1.8z" fill="#2a2a2a"/>
<g transform="skewY(-7)" font-family="Liberation Sans" font-style="italic" font-weight="bold" fill="#161616">
<text x="339" y="280.5" font-size="9.2" letter-spacing="-0.2">Krvavé</text>
<text x="333.5" y="292" font-size="9.2" letter-spacing="-0.3">levandule</text>
</g>
<g transform="skewY(-7)" fill="#333"><rect x="325.5" y="329" width="12" height="0.9"/><rect x="325" y="335" width="15" height="0.9"/></g>
</svg>

<svg style="left:473px;top:203px" width="158" height="158" viewBox="0 0 158 158">
<defs>
<linearGradient id="vin" x1="0" y1="0" x2="1" y2="0.3"><stop offset="0" stop-color="#0a58dc"/><stop offset="0.6" stop-color="#0b5fe6"/><stop offset="1" stop-color="#0e6cf0"/></linearGradient>
<linearGradient id="lab" x1="0" y1="0" x2="1" y2="1"><stop offset="0" stop-color="#1c1c1c"/><stop offset="0.45" stop-color="#3a3a3a"/><stop offset="0.5" stop-color="#8a8a8a"/><stop offset="0.55" stop-color="#3a3a3a"/><stop offset="1" stop-color="#1c1c1c"/></linearGradient>
<clipPath id="vc"><circle cx="79" cy="79" r="79"/></clipPath>
</defs>
<circle cx="79" cy="79" r="79" fill="url(#vin)"/>
<radialGradient id="stk" gradientUnits="userSpaceOnUse" cx="79" cy="79" r="79"><stop offset="0.3" stop-color="#7aaaf4" stop-opacity="0.15"/><stop offset="0.55" stop-color="#7aaaf4" stop-opacity="0.55"/><stop offset="1" stop-color="#7aaaf4" stop-opacity="0.7"/></radialGradient>
<g clip-path="url(#vc)" fill="url(#stk)">
<path d="M79 79L149.7 8.3L127.5 -8.5z"/>
<path d="M79 79L8.3 149.7L30.5 166.5z"/>
</g>
<circle cx="79" cy="79" r="27" fill="url(#lab)"/>
<circle cx="79" cy="79" r="6" fill="#2a2a2a"/>
<text x="66" y="81.5" font-family="Liberation Sans" font-weight="bold" font-size="7" fill="#fff" text-anchor="middle" letter-spacing="-0.4">serato</text>
<rect x="88" y="78.5" width="14" height="1" fill="#3a7ad0"/>
</svg>

<svg style="left:690px;top:194px" width="118" height="177" viewBox="690 194 118 177">
<defs>
<linearGradient id="sky3" x1="0" y1="0" x2="0" y2="1"><stop offset="0" stop-color="#dfe2e2"/><stop offset="1" stop-color="#cfd2d0"/></linearGradient>
<clipPath id="pc3"><path d="M704.4 290.1L783.5 291.9L783.5 351.1L704.4 337.3z"/></clipPath>
</defs>
<rect x="690" y="194" width="118" height="177" fill="#000"/>
<path d="M786.8 211L792 212.5V353.5L786.8 356z" fill="#c8b418"/>
<path d="M783.5 205.1L786.8 208V357L783.5 360z" fill="#e6e6ee"/>
<path d="M704.4 219.2L783.5 205.1L783.5 360L704.4 345.2z" fill="#fde11e"/>
<g clip-path="url(#pc3)">
<rect x="704" y="289" width="80" height="64" fill="url(#sky3)"/>
<path d="M732 314L737 300L742 296L748 296.5L752 302L756 310L768 312L783.5 313V322L704 322z" fill="#a2a4a2"/>
<path d="M748 296.5L752 302L756 310L748 312z" fill="#8a8c8c"/>
<path d="M704 313L730 316L760 314L783.5 318V323L704 323z" fill="#d8d8d2" opacity="0.9"/>
<rect x="704" y="319" width="80" height="36" fill="#9a5a40"/>
<rect x="740.2" y="335.6" width="1.5" height="2.0" fill="#b8a890"/>
<rect x="742.0" y="337.5" width="1.4" height="1.1" fill="#e08050"/>
<rect x="768.4" y="340.3" width="2.2" height="1.8" fill="#e08050"/>
<rect x="753.1" y="321.5" width="1.1" height="1.2" fill="#c8643c"/>
<rect x="723.5" y="317.1" width="1.7" height="1.2" fill="#e08050"/>
<rect x="722.9" y="326.3" width="1.5" height="1.3" fill="#c8643c"/>
<rect x="783.3" y="350.8" width="1.3" height="1.9" fill="#e0d0b8"/>
<rect x="745.0" y="317.0" width="1.5" height="2.0" fill="#4a3430"/>
<rect x="771.4" y="316.0" width="1.6" height="2.2" fill="#c8643c"/>
<rect x="735.8" y="318.6" width="1.3" height="1.1" fill="#3a2a28"/>
<rect x="764.4" y="320.1" width="1.0" height="1.6" fill="#c8643c"/>
<rect x="742.9" y="339.9" width="2.2" height="1.9" fill="#d87048"/>
<rect x="737.6" y="329.4" width="1.0" height="2.0" fill="#d87048"/>
<rect x="781.5" y="336.7" width="1.3" height="1.5" fill="#9a8a7a"/>
<rect x="772.0" y="338.5" width="1.3" height="1.3" fill="#d87048"/>
<rect x="765.5" y="327.5" width="1.1" height="1.3" fill="#c8643c"/>
<rect x="754.8" y="316.5" width="1.2" height="1.7" fill="#e08050"/>
<rect x="770.2" y="320.8" width="1.4" height="1.3" fill="#d87048"/>
<rect x="752.7" y="341.4" width="1.8" height="1.5" fill="#d87048"/>
<rect x="742.6" y="318.7" width="1.0" height="2.2" fill="#c8643c"/>
<rect x="751.6" y="326.3" width="1.2" height="1.6" fill="#c8643c"/>
<rect x="756.1" y="337.6" width="2.1" height="1.2" fill="#d87048"/>
<rect x="705.7" y="325.4" width="1.1" height="1.3" fill="#c8643c"/>
<rect x="711.7" y="320.8" width="1.8" height="1.8" fill="#b85a3a"/>
<rect x="750.6" y="320.9" width="1.6" height="1.4" fill="#c8643c"/>
<rect x="729.1" y="317.2" width="1.6" height="1.9" fill="#4a3430"/>
<rect x="710.4" y="335.1" width="1.9" height="1.2" fill="#3a2a28"/>
<rect x="780.6" y="328.0" width="2.1" height="2.0" fill="#e08050"/>
<rect x="772.7" y="336.0" width="1.5" height="1.0" fill="#5a4038"/>
<rect x="710.1" y="319.2" width="2.1" height="1.9" fill="#b85a3a"/>
<rect x="735.1" y="341.7" width="1.6" height="1.6" fill="#5a4038"/>
<rect x="745.4" y="334.0" width="1.6" height="1.3" fill="#c8643c"/>
<rect x="759.6" y="333.4" width="1.3" height="1.0" fill="#5a4038"/>
<rect x="728.2" y="339.7" width="1.9" height="1.4" fill="#d87048"/>
<rect x="778.0" y="333.4" width="1.8" height="1.2" fill="#e08050"/>
<rect x="776.7" y="346.8" width="1.3" height="1.2" fill="#b85a3a"/>
<rect x="707.6" y="318.2" width="1.1" height="1.6" fill="#9a8a7a"/>
<rect x="777.6" y="345.1" width="1.8" height="1.9" fill="#e08050"/>
<rect x="771.0" y="337.9" width="1.3" height="1.7" fill="#c8643c"/>
<rect x="758.0" y="325.8" width="1.8" height="1.5" fill="#c8643c"/>
<rect x="713.5" y="319.8" width="2.2" height="1.8" fill="#b85a3a"/>
<rect x="720.2" y="332.6" width="1.9" height="1.6" fill="#c8643c"/>
<rect x="707.3" y="323.9" width="1.8" height="1.6" fill="#e0d0b8"/>
<rect x="753.0" y="342.5" width="1.1" height="2.1" fill="#d87048"/>
<rect x="761.5" y="320.5" width="1.5" height="1.7" fill="#c8643c"/>
<rect x="774.0" y="343.9" width="1.4" height="2.2" fill="#b8a890"/>
<rect x="714.2" y="324.5" width="2.2" height="1.6" fill="#c8643c"/>
<rect x="767.0" y="327.2" width="1.4" height="1.1" fill="#9a8a7a"/>
<rect x="739.3" y="335.3" width="2.1" height="1.3" fill="#b8a890"/>
<rect x="773.0" y="331.0" width="1.8" height="2.1" fill="#b85a3a"/>
<rect x="775.6" y="334.1" width="2.1" height="1.6" fill="#5a4038"/>
<rect x="779.5" y="319.0" width="2.0" height="1.7" fill="#b85a3a"/>
<rect x="717.4" y="334.0" width="1.4" height="1.5" fill="#b8a890"/>
<rect x="771.3" y="347.5" width="2.2" height="1.6" fill="#d87048"/>
<rect x="749.7" y="323.0" width="1.7" height="1.0" fill="#c8643c"/>
<rect x="781.1" y="334.1" width="1.6" height="1.8" fill="#c8643c"/>
<rect x="709.6" y="334.9" width="1.3" height="1.6" fill="#e08050"/>
<rect x="714.4" y="331.2" width="1.6" height="1.1" fill="#b8a890"/>
<rect x="737.6" y="317.0" width="1.0" height="1.2" fill="#c8643c"/>
<rect x="705.3" y="325.9" width="1.7" height="1.1" fill="#4a3430"/>
<rect x="762.2" y="320.3" width="1.9" height="1.8" fill="#b85a3a"/>
<rect x="773.9" y="316.8" width="1.7" height="1.6" fill="#3a2a28"/>
<rect x="772.7" y="334.7" width="2.0" height="1.7" fill="#d87048"/>
<rect x="772.2" y="324.1" width="2.1" height="1.4" fill="#5a4038"/>
<rect x="774.6" y="320.7" width="1.3" height="1.1" fill="#c8643c"/>
<rect x="770.2" y="330.8" width="1.2" height="1.8" fill="#9a8a7a"/>
<rect x="767.6" y="319.4" width="2.1" height="2.2" fill="#5a4038"/>
<rect x="713.5" y="333.7" width="2.2" height="2.0" fill="#e0d0b8"/>
<rect x="767.9" y="332.9" width="1.2" height="1.2" fill="#e08050"/>
<rect x="782.7" y="348.4" width="1.2" height="1.8" fill="#c8643c"/>
<rect x="710.5" y="319.4" width="1.6" height="1.5" fill="#e08050"/>
<rect x="751.9" y="316.5" width="1.2" height="1.5" fill="#4a3430"/>
<rect x="762.9" y="330.2" width="1.1" height="2.0" fill="#d87048"/>
<rect x="730.0" y="319.0" width="2.1" height="1.7" fill="#e0d0b8"/>
<rect x="719.5" y="336.5" width="1.3" height="1.1" fill="#b85a3a"/>
<rect x="763.2" y="321.6" width="2.1" height="2.1" fill="#9a8a7a"/>
<rect x="759.4" y="342.9" width="1.2" height="1.2" fill="#b8a890"/>
<rect x="767.5" y="326.6" width="2.2" height="2.1" fill="#b85a3a"/>
<rect x="708.3" y="325.6" width="1.4" height="1.8" fill="#b8a890"/>
<rect x="749.5" y="334.7" width="1.8" height="1.8" fill="#e08050"/>
<rect x="706.2" y="337.5" width="1.5" height="1.6" fill="#5a4038"/>
<rect x="764.6" y="338.7" width="1.3" height="2.1" fill="#b85a3a"/>
<rect x="747.9" y="333.8" width="2.0" height="1.1" fill="#e0d0b8"/>
<rect x="739.5" y="338.6" width="1.5" height="2.1" fill="#c8643c"/>
<rect x="772.1" y="335.0" width="2.1" height="1.5" fill="#5a4038"/>
<rect x="746.1" y="336.9" width="1.6" height="1.3" fill="#b85a3a"/>
<rect x="777.9" y="339.2" width="1.0" height="1.3" fill="#4a3430"/>
<rect x="707.8" y="321.5" width="1.1" height="1.4" fill="#b8a890"/>
<rect x="735.9" y="336.4" width="1.1" height="2.1" fill="#5a4038"/>
<rect x="738.4" y="332.7" width="1.1" height="1.1" fill="#9a8a7a"/>
<rect x="768.5" y="347.8" width="1.7" height="1.1" fill="#d87048"/>
<rect x="753.8" y="331.9" width="1.4" height="1.2" fill="#c8643c"/>
<rect x="733.1" y="320.9" width="1.8" height="1.8" fill="#b85a3a"/>
<rect x="733.2" y="342.0" width="2.1" height="1.9" fill="#9a8a7a"/>
<rect x="723.3" y="320.0" width="1.7" height="1.4" fill="#e0d0b8"/>
<rect x="725.9" y="340.0" width="1.2" height="1.3" fill="#3a2a28"/>
<rect x="744.1" y="338.9" width="1.8" height="1.0" fill="#c8643c"/>
<rect x="724.9" y="316.9" width="1.6" height="1.1" fill="#d87048"/>
<rect x="748.0" y="338.1" width="1.4" height="1.4" fill="#e08050"/>
<rect x="743.5" y="320.7" width="1.5" height="2.0" fill="#9a8a7a"/>
<rect x="770.7" y="342.9" width="1.5" height="1.2" fill="#b85a3a"/>
<rect x="751.6" y="326.2" width="1.5" height="1.4" fill="#9a8a7a"/>
<rect x="710.6" y="318.9" width="2.0" height="1.6" fill="#5a4038"/>
<rect x="769.5" y="316.3" width="1.8" height="1.6" fill="#c8643c"/>
<rect x="764.8" y="327.5" width="1.4" height="1.9" fill="#9a8a7a"/>
<rect x="733.4" y="320.1" width="1.7" height="2.1" fill="#3a2a28"/>
<rect x="758.7" y="325.8" width="1.5" height="1.3" fill="#b85a3a"/>
<rect x="781.0" y="341.5" width="1.4" height="1.4" fill="#c8643c"/>
<rect x="733.1" y="329.8" width="1.9" height="1.4" fill="#d87048"/>
<rect x="735.3" y="321.4" width="1.2" height="1.9" fill="#4a3430"/>
<rect x="774.1" y="325.9" width="1.7" height="1.7" fill="#c8643c"/>
<rect x="780.8" y="338.8" width="1.7" height="1.4" fill="#9a8a7a"/>
<rect x="747.5" y="327.7" width="2.1" height="1.1" fill="#c8643c"/>
<rect x="754.6" y="321.0" width="1.5" height="1.9" fill="#3a2a28"/>
<rect x="731.1" y="332.1" width="1.8" height="1.6" fill="#b85a3a"/>
<rect x="746.9" y="341.2" width="1.5" height="2.0" fill="#4a3430"/>
<rect x="757.1" y="345.9" width="2.1" height="2.1" fill="#9a8a7a"/>
<rect x="755.0" y="334.3" width="1.5" height="1.5" fill="#4a3430"/>
<rect x="782.8" y="329.1" width="1.5" height="1.6" fill="#d87048"/>
<rect x="741.7" y="341.6" width="1.9" height="1.2" fill="#d87048"/>
<rect x="709.3" y="332.1" width="1.4" height="1.2" fill="#4a3430"/>
<rect x="732.8" y="336.6" width="1.7" height="1.3" fill="#5a4038"/>
<rect x="719.0" y="325.8" width="1.8" height="2.1" fill="#b85a3a"/>
<rect x="742.7" y="330.1" width="1.7" height="2.1" fill="#e0d0b8"/>
<rect x="742.6" y="323.7" width="2.0" height="1.5" fill="#d87048"/>
<rect x="746.1" y="334.1" width="1.8" height="1.3" fill="#c8643c"/>
<rect x="705.3" y="332.5" width="1.9" height="1.7" fill="#d87048"/>
<rect x="716.8" y="321.5" width="2.1" height="2.0" fill="#b85a3a"/>
<rect x="753.4" y="334.1" width="1.0" height="2.0" fill="#d87048"/>
<rect x="771.3" y="344.8" width="1.7" height="1.6" fill="#b85a3a"/>
<rect x="774.8" y="340.3" width="1.0" height="1.2" fill="#b85a3a"/>
<rect x="719.7" y="339.9" width="1.3" height="1.7" fill="#b8a890"/>
<rect x="746.0" y="321.5" width="1.4" height="1.5" fill="#b8a890"/>
<rect x="757.2" y="318.3" width="1.1" height="1.5" fill="#d87048"/>
<rect x="770.0" y="338.9" width="1.9" height="1.6" fill="#e08050"/>
<rect x="727.6" y="320.0" width="1.2" height="1.7" fill="#e0d0b8"/>
<rect x="727.4" y="329.2" width="2.1" height="1.9" fill="#b85a3a"/>
<rect x="748.3" y="319.0" width="1.9" height="1.4" fill="#e08050"/>
<rect x="779.2" y="335.7" width="1.5" height="1.5" fill="#5a4038"/>
<rect x="712.5" y="337.8" width="1.2" height="1.5" fill="#d87048"/>
<rect x="770.6" y="336.7" width="1.0" height="2.2" fill="#d87048"/>
<rect x="738.7" y="343.0" width="2.1" height="1.2" fill="#e08050"/>
<rect x="720.7" y="321.2" width="1.4" height="1.5" fill="#5a4038"/>
<rect x="705.6" y="330.0" width="1.8" height="1.7" fill="#4a3430"/>
<rect x="705.9" y="327.6" width="1.1" height="1.5" fill="#e08050"/>
<rect x="744.7" y="343.6" width="1.9" height="1.3" fill="#e0d0b8"/>
<rect x="747.0" y="326.4" width="1.7" height="1.2" fill="#d87048"/>
<rect x="749.3" y="316.9" width="1.2" height="1.6" fill="#4a3430"/>
<rect x="737.4" y="327.7" width="1.3" height="2.1" fill="#b85a3a"/>
<rect x="740.2" y="341.5" width="1.7" height="1.3" fill="#c8643c"/>
<rect x="769.1" y="337.1" width="1.3" height="2.1" fill="#c8643c"/>
<rect x="723.5" y="336.1" width="1.7" height="2.0" fill="#9a8a7a"/>
<rect x="740.3" y="330.1" width="1.2" height="1.9" fill="#e0d0b8"/>
<rect x="771.4" y="347.7" width="2.0" height="1.0" fill="#3a2a28"/>
<rect x="720.2" y="332.4" width="1.1" height="1.5" fill="#e08050"/>
<rect x="731.0" y="320.6" width="1.1" height="1.9" fill="#b85a3a"/>
<rect x="761.5" y="343.6" width="1.7" height="1.6" fill="#e08050"/>
<rect x="736.9" y="337.8" width="1.9" height="1.6" fill="#5a4038"/>
<rect x="783.1" y="345.3" width="2.0" height="1.1" fill="#b8a890"/>
<rect x="730.5" y="334.2" width="1.4" height="1.1" fill="#c8643c"/>
<rect x="762.3" y="336.9" width="2.1" height="2.1" fill="#b8a890"/>
<rect x="781.3" y="332.6" width="1.7" height="1.8" fill="#d87048"/>
<rect x="778.8" y="346.8" width="2.2" height="1.8" fill="#e0d0b8"/>
<rect x="772.9" y="330.7" width="1.8" height="1.5" fill="#9a8a7a"/>
<rect x="714.1" y="318.5" width="1.1" height="1.6" fill="#d87048"/>
<rect x="779.6" y="316.0" width="1.0" height="1.2" fill="#b85a3a"/>
<rect x="739.3" y="331.8" width="1.4" height="1.7" fill="#d87048"/>
<rect x="708.0" y="317.1" width="1.4" height="1.2" fill="#b8a890"/>
<rect x="765.8" y="343.2" width="1.4" height="2.1" fill="#9a8a7a"/>
<rect x="775.3" y="322.8" width="2.1" height="1.0" fill="#b8a890"/>
<rect x="754.7" y="340.4" width="1.8" height="1.2" fill="#3a2a28"/>
<rect x="774.0" y="317.8" width="2.2" height="1.3" fill="#b85a3a"/>
<rect x="766.0" y="330.5" width="1.1" height="1.8" fill="#b85a3a"/>
<rect x="744.1" y="326.3" width="1.7" height="1.3" fill="#c8643c"/>
<rect x="757.2" y="325.7" width="1.6" height="1.1" fill="#4a3430"/>
<rect x="776.9" y="318.6" width="1.7" height="1.3" fill="#9a8a7a"/>
<rect x="711.3" y="326.0" width="1.2" height="1.9" fill="#9a8a7a"/>
<rect x="750.7" y="316.1" width="1.2" height="1.7" fill="#9a8a7a"/>
<rect x="755.4" y="328.6" width="1.6" height="1.6" fill="#4a3430"/>
<rect x="771.3" y="339.9" width="1.7" height="1.9" fill="#d87048"/>
<rect x="713.3" y="331.2" width="1.9" height="1.9" fill="#3a2a28"/>
<rect x="767.0" y="324.3" width="2.0" height="1.7" fill="#d87048"/>
<rect x="725.1" y="323.1" width="1.7" height="2.0" fill="#9a8a7a"/>
<rect x="718.6" y="321.3" width="2.0" height="1.6" fill="#e08050"/>
<rect x="761.6" y="346.0" width="2.1" height="1.7" fill="#c8643c"/>
<rect x="747.4" y="343.7" width="1.1" height="1.5" fill="#d87048"/>
<rect x="759.4" y="344.7" width="1.9" height="1.6" fill="#5a4038"/>
<rect x="755.8" y="333.9" width="1.2" height="1.8" fill="#d87048"/>
<rect x="770.1" y="343.5" width="1.6" height="1.8" fill="#e08050"/>
<rect x="751.9" y="320.7" width="1.9" height="1.0" fill="#3a2a28"/>
<rect x="715.6" y="329.8" width="2.1" height="2.2" fill="#e08050"/>
<rect x="758.2" y="341.1" width="1.3" height="1.3" fill="#e0d0b8"/>
<rect x="748.1" y="324.5" width="1.4" height="1.4" fill="#d87048"/>
<rect x="782.0" y="337.4" width="1.7" height="2.2" fill="#e08050"/>
<rect x="762.7" y="335.9" width="2.1" height="1.2" fill="#e0d0b8"/>
<rect x="772.4" y="348.7" width="1.9" height="1.3" fill="#e08050"/>
<rect x="731.9" y="322.4" width="1.6" height="1.5" fill="#d87048"/>
<rect x="751.4" y="342.6" width="2.2" height="1.8" fill="#e08050"/>
<rect x="772.6" y="323.2" width="1.1" height="1.3" fill="#c8643c"/>
<rect x="779.4" y="337.7" width="1.6" height="1.7" fill="#b85a3a"/>
<rect x="755.8" y="323.6" width="1.2" height="2.1" fill="#c8643c"/>
<rect x="706.0" y="327.3" width="2.0" height="1.5" fill="#c8643c"/>
<rect x="757.3" y="326.6" width="1.0" height="1.2" fill="#5a4038"/>
<rect x="751.5" y="317.1" width="1.6" height="1.8" fill="#e08050"/>
<rect x="745.3" y="335.2" width="1.8" height="1.2" fill="#e08050"/>
<rect x="720.6" y="325.8" width="1.2" height="1.6" fill="#5a4038"/>
<rect x="732.5" y="319.6" width="1.2" height="2.0" fill="#d87048"/>
<rect x="763.5" y="332.9" width="1.8" height="1.1" fill="#b85a3a"/>
<rect x="771.9" y="335.5" width="2.1" height="2.0" fill="#c8643c"/>
<rect x="723.0" y="338.1" width="1.1" height="1.6" fill="#e08050"/>
<rect x="726.9" y="340.6" width="1.2" height="1.9" fill="#e08050"/>
<rect x="732.1" y="340.9" width="2.1" height="2.0" fill="#b85a3a"/>
<rect x="742.2" y="325.0" width="1.8" height="1.0" fill="#b8a890"/>
<rect x="735.4" y="328.8" width="1.3" height="1.5" fill="#e08050"/>
<rect x="771.4" y="326.5" width="1.1" height="1.0" fill="#5a4038"/>
<rect x="730.0" y="329.1" width="1.8" height="1.5" fill="#d87048"/>
<rect x="721.5" y="318.6" width="1.7" height="1.1" fill="#e08050"/>
<rect x="709.8" y="332.2" width="1.0" height="1.2" fill="#e08050"/>
<rect x="744.5" y="326.8" width="1.2" height="1.2" fill="#c8643c"/>
<rect x="722.5" y="339.8" width="2.1" height="2.2" fill="#c8643c"/>
<rect x="704.7" y="335.1" width="1.1" height="2.0" fill="#e0d0b8"/>
<rect x="774.3" y="340.2" width="1.4" height="2.1" fill="#b8a890"/>
<rect x="729.2" y="341.1" width="1.2" height="1.2" fill="#3a2a28"/>
<rect x="717.1" y="327.7" width="1.4" height="1.5" fill="#3a2a28"/>
<rect x="733.4" y="339.4" width="1.4" height="1.8" fill="#d87048"/>
<rect x="777.0" y="341.8" width="2.0" height="2.1" fill="#9a8a7a"/>
<rect x="744.9" y="339.8" width="2.0" height="1.1" fill="#e08050"/>
<rect x="724.5" y="333.8" width="1.3" height="1.8" fill="#b8a890"/>
<rect x="733.5" y="339.9" width="2.0" height="2.0" fill="#d87048"/>
<rect x="749.3" y="330.7" width="1.9" height="1.3" fill="#3a2a28"/>
<rect x="717.1" y="323.0" width="1.3" height="1.2" fill="#5a4038"/>
<rect x="705.5" y="336.5" width="1.3" height="1.3" fill="#9a8a7a"/>
<rect x="724.3" y="339.3" width="1.1" height="1.9" fill="#d87048"/>
<rect x="713.8" y="317.5" width="1.5" height="2.1" fill="#c8643c"/>
<rect x="770.3" y="345.9" width="1.4" height="2.0" fill="#c8643c"/>
<rect x="770.7" y="325.9" width="1.9" height="2.2" fill="#e08050"/>
<rect x="735.2" y="340.3" width="1.5" height="2.0" fill="#d87048"/>
<rect x="774.0" y="331.1" width="1.3" height="1.7" fill="#c8643c"/>
<rect x="726.1" y="330.0" width="1.6" height="1.4" fill="#c8643c"/>
<rect x="724.9" y="317.8" width="1.8" height="1.0" fill="#b85a3a"/>
<rect x="731.0" y="320.9" width="1.6" height="1.5" fill="#b8a890"/>
<rect x="768.2" y="329.9" width="1.3" height="2.1" fill="#b85a3a"/>
<rect x="761.7" y="322.2" width="1.6" height="1.8" fill="#d87048"/>
<rect x="725.8" y="316.8" width="1.6" height="1.0" fill="#4a3430"/>
<rect x="705.3" y="334.5" width="1.6" height="1.4" fill="#e0d0b8"/>
<rect x="746.4" y="339.3" width="2.1" height="1.6" fill="#9a8a7a"/>
<rect x="770.8" y="330.3" width="1.0" height="1.7" fill="#e0d0b8"/>
<rect x="722.4" y="329.6" width="2.0" height="1.4" fill="#b85a3a"/>
<rect x="754.9" y="328.4" width="1.7" height="1.3" fill="#b85a3a"/>
<rect x="721.3" y="322.3" width="1.7" height="1.8" fill="#d87048"/>
<rect x="718.4" y="319.7" width="1.2" height="1.0" fill="#b85a3a"/>
<rect x="736.0" y="317.8" width="1.0" height="1.2" fill="#d87048"/>
<rect x="709.7" y="336.6" width="1.5" height="2.2" fill="#5a4038"/>
<rect x="721.8" y="330.3" width="2.0" height="1.1" fill="#4a3430"/>
<rect x="774.1" y="343.2" width="1.2" height="1.8" fill="#c8643c"/>
<rect x="734.3" y="338.5" width="2.1" height="2.0" fill="#b85a3a"/>
<rect x="754.1" y="333.7" width="1.1" height="1.9" fill="#4a3430"/>
<rect x="763.3" y="331.3" width="1.6" height="1.5" fill="#e08050"/>
<rect x="747.2" y="317.5" width="1.8" height="1.5" fill="#e0d0b8"/>
<rect x="751.3" y="336.8" width="1.6" height="1.4" fill="#9a8a7a"/>
<rect x="724.6" y="337.8" width="2.2" height="1.5" fill="#e08050"/>
<rect x="773.0" y="320.4" width="1.1" height="1.2" fill="#b8a890"/>
<rect x="777.5" y="343.6" width="2.0" height="1.6" fill="#c8643c"/>
<rect x="783.0" y="318.3" width="1.4" height="1.6" fill="#e0d0b8"/>
<rect x="732.0" y="323.3" width="1.2" height="1.3" fill="#e08050"/>
<rect x="755.3" y="318.6" width="2.1" height="1.1" fill="#5a4038"/>
<rect x="743.7" y="318.0" width="2.0" height="1.2" fill="#9a8a7a"/>
<rect x="733.3" y="319.5" width="2.1" height="1.3" fill="#b85a3a"/>
<rect x="727.2" y="330.6" width="2.0" height="1.7" fill="#4a3430"/>
<rect x="775.7" y="318.5" width="1.6" height="1.4" fill="#9a8a7a"/>
<rect x="780.1" y="350.0" width="1.5" height="2.0" fill="#5a4038"/>
<rect x="759.8" y="345.6" width="1.7" height="1.8" fill="#e0d0b8"/>
<rect x="718.7" y="320.5" width="1.0" height="1.3" fill="#5a4038"/>
<rect x="724.9" y="328.0" width="1.2" height="2.2" fill="#5a4038"/>
<rect x="759.1" y="341.8" width="1.9" height="1.2" fill="#b85a3a"/>
<rect x="710.1" y="325.3" width="1.3" height="1.2" fill="#e08050"/>
<rect x="714.2" y="319.3" width="1.3" height="1.7" fill="#e08050"/>
<rect x="757.9" y="331.9" width="1.2" height="1.5" fill="#b8a890"/>
<rect x="721.8" y="338.4" width="1.3" height="1.5" fill="#b85a3a"/>
<rect x="779.9" y="326.3" width="1.7" height="1.0" fill="#3a2a28"/>
<rect x="734.0" y="336.8" width="1.5" height="1.4" fill="#b8a890"/>
<rect x="769.3" y="345.8" width="1.8" height="1.5" fill="#3a2a28"/>
<rect x="705.7" y="317.1" width="1.4" height="2.1" fill="#3a2a28"/>
<rect x="779.5" y="316.8" width="1.1" height="1.2" fill="#5a4038"/>
<rect x="744.4" y="332.8" width="2.2" height="2.2" fill="#4a3430"/>
<rect x="782.9" y="329.8" width="1.6" height="1.1" fill="#e0d0b8"/>
<rect x="756.3" y="343.7" width="2.2" height="1.3" fill="#e0d0b8"/>
<rect x="733.7" y="321.0" width="1.0" height="2.2" fill="#c8643c"/>
<rect x="759.4" y="343.5" width="2.0" height="1.9" fill="#e0d0b8"/>
<rect x="765.8" y="320.2" width="1.4" height="1.4" fill="#c8643c"/>
<rect x="770.2" y="346.9" width="1.6" height="1.6" fill="#e08050"/>
<rect x="728.3" y="333.8" width="1.2" height="1.1" fill="#d87048"/>
<rect x="744.9" y="326.3" width="1.7" height="1.6" fill="#9a8a7a"/>
<rect x="782.7" y="336.6" width="1.6" height="2.0" fill="#c8643c"/>
<rect x="745.9" y="330.2" width="2.2" height="1.5" fill="#3a2a28"/>
<rect x="705.2" y="321.4" width="1.9" height="1.5" fill="#e0d0b8"/>
<rect x="727.7" y="337.7" width="1.4" height="2.2" fill="#e08050"/>
<rect x="755.3" y="345.7" width="1.4" height="1.3" fill="#e08050"/>
<rect x="746.9" y="339.0" width="1.2" height="2.2" fill="#e08050"/>
<rect x="748.7" y="320.8" width="1.5" height="1.4" fill="#9a8a7a"/>
<rect x="762.9" y="325.0" width="2.0" height="1.5" fill="#e08050"/>
<rect x="755.7" y="327.7" width="2.0" height="1.1" fill="#b85a3a"/>
<rect x="746.2" y="335.2" width="1.8" height="1.9" fill="#d87048"/>
<rect x="707.0" y="328.6" width="1.9" height="1.6" fill="#e0d0b8"/>
<rect x="705.1" y="330.2" width="1.8" height="1.4" fill="#9a8a7a"/>
<rect x="759.3" y="345.4" width="1.4" height="1.6" fill="#c8643c"/>
<rect x="745.2" y="342.4" width="1.3" height="1.7" fill="#c8643c"/>
<rect x="755.6" y="329.1" width="1.1" height="2.2" fill="#c8643c"/>
<rect x="770.2" y="327.5" width="1.9" height="1.8" fill="#d87048"/>
<path d="M724 320L726.5 309L729 320z" fill="#6a7a6a"/>
<path d="M704 334L783.5 340V352L704 340z" fill="#6a5a4e" opacity="0.55"/>
<path d="M704 318L714 315L724 319L740 316L760 318L783.5 316V321L704 322z" fill="#d0ccc4" opacity="0.6"/>
</g>
<path d="M704.4 290.1L783.5 291.9" stroke="#2a2a10" stroke-width="0.8"/>
<g transform="skewY(-6.8)" font-family="Liberation Sans" fill="#1a1a1a" stroke="#1a1a1a" stroke-width="0.35">
<text x="711" y="315" font-size="12" textLength="58" lengthAdjust="spacingAndGlyphs">Zapomenuté</text>
<text x="711.5" y="331" font-size="12" textLength="41" lengthAdjust="spacingAndGlyphs">příběhy 2</text>
</g>
<g transform="skewY(-6.8)"><rect x="711" y="345.5" width="26" height="1.6" fill="#6a5a20"/></g>
</svg>

<div class="t" style="left:266px;top:377px;font-size:14px;color:#e3e3e3;letter-spacing:0.16px">Krvavé levandule</div>
<div class="t" style="left:266px;top:400.3px;font-size:12px;color:#b4b4b4;letter-spacing:0.08px">Marian Kechlibar</div>
<div class="t" style="left:463px;top:377px;font-size:14px;color:#e3e3e3;letter-spacing:0.16px">M. Kechlibar - Zapomenu…</div>
<div class="t" style="left:463px;top:400.3px;font-size:12px;color:#b4b4b4;letter-spacing:0.08px">Jan Bilek, Alena Kubinova</div>
<div class="t" style="left:660px;top:377px;font-size:14px;color:#e3e3e3;letter-spacing:0.16px">Zapomenuté příběhy 2</div>
<div class="t" style="left:660px;top:400.3px;font-size:12px;color:#b4b4b4;letter-spacing:0.08px">Marian Kechlibar</div>
<div class="t" style="left:796.5px;top:452px;font-size:14px;color:#fff;letter-spacing:0.1px">Items per page:</div>
<div class="t" style="left:912.3px;top:451.5px;font-size:14px;color:#fff;letter-spacing:0.2px">12</div>
<div class="t" style="left:984px;top:452px;font-size:14px;color:#fff;letter-spacing:0.1px">1-3 of 3</div>

<div id="player" class="a"></div>
<div class="a" style="left:0;top:1046px;width:1079px;height:1px;background:#363636"></div>
<div class="t" style="left:100.9px;top:1058px;font-size:16px;font-weight:bold;color:#6893bd;letter-spacing:-0.1px">Povesen za krk</div>
<div class="a" style="left:100.7px;top:1077px;width:358.3px;height:22px;overflow:hidden"><div class="t" style="left:0;top:3.2px;font-size:16px;color:#6893bd">Jan Bilek, Alena Kubinova - M. Kechlibar - Zapomenute pribehy 2</div></div>
<div class="t" style="left:101px;top:1102.6px;font-size:12px;color:#fff">00:00</div>
<div class="t" style="left:430px;top:1102.6px;font-size:12px;color:#fff">36:11</div>


<!-- sidebar icons -->
<svg style="left:17px;top:100px" width="24" height="24" viewBox="0 0 24 24" fill="#fff"><path d="M16.59 8.59L12 13.17 7.41 8.59 6 10l6 6 6-6z"/></svg>
<svg style="left:33px;top:136px" width="24" height="24" viewBox="0 0 24 24" fill="#fff"><path d="M12 2C6.48 2 2 6.48 2 12s4.48 10 10 10 10-4.48 10-10S17.52 2 12 2zm0 14.5c-2.49 0-4.5-2.01-4.5-4.5S9.51 7.5 12 7.5s4.5 2.01 4.5 4.5-2.01 4.5-4.5 4.5zm0-5.5c-.55 0-1 .45-1 1s.45 1 1 1 1-.45 1-1-.45-1-1-1z"/></svg>
<svg style="left:33px;top:172px" width="24" height="24" viewBox="0 0 24 24" fill="#fff"><path d="M10.59 9.17L5.41 4 4 5.41l5.17 5.17 1.42-1.41zM14.5 4l2.04 2.04L4 18.59 5.41 20 17.96 7.46 20 9.5V4h-5.5zm.33 9.41l-1.41 1.41 3.13 3.13L14.5 20H20v-5.5l-2.04 2.04-3.13-3.13z"/></svg>
<svg style="left:33px;top:208px" width="24" height="24" viewBox="0 0 24 24" fill="#fff"><path d="M16.5 3c-1.74 0-3.41.81-4.5 2.09C10.91 3.81 9.24 3 7.5 3 4.42 3 2 5.42 2 8.5c0 3.78 3.4 6.86 8.550 11.54L12 21.35l1.45-1.32C18.6 15.36 22 12.28 22 8.5 22 5.42 19.58 3 16.5 3zm-4.4 15.55l-.1.1-.1-.1C7.14 14.24 4 11.39 4 8.5 4 6.5 5.5 5 7.5 5c1.54 0 3.04.99 3.57 2.36h1.87C13.46 5.99 14.96 5 16.5 5c2 0 3.5 1.5 3.5 3.5 0 2.890-3.140 5.74-7.9 10.05z"/></svg>
<svg style="left:33px;top:244px" width="24" height="24" viewBox="0 0 24 24" fill="#fff"><path d="M22 9.24l-7.19-.62L12 2 9.19 8.63 2 9.24l5.46 4.73L5.82 21 12 17.27 18.18 21l-1.63-7.03L22 9.24zM12 15.4l-3.76 2.27 1-4.28-3.32-2.88 4.38-.38L12 6.1l1.71 4.04 4.38.38-3.32 2.88 1 4.28L12 15.4z"/></svg>
<svg style="left:33px;top:280px" width="24" height="24" viewBox="0 0 24 24" fill="#fff"><path d="M4 6H2v14c0 1.1.9 2 2 2h14v-2H4V6zm16-4H8c-1.1 0-2 .9-2 2v12c0 1.1.9 2 2 2h12c1.1 0 2-.9 2-2V4c0-1.1-.9-2-2-2zm0 14H8V4h12v12zm-7-2h2v-3h3V9h-3V6h-2v3h-3v2h3z"/></svg>
<svg style="left:33px;top:316px" width="24" height="24" viewBox="0 0 24 24" fill="#fff"><path d="M4 6H2v14c0 1.1.9 2 2 2h14v-2H4V6zm16-4H8c-1.1 0-2 .9-2 2v12c0 1.1.9 2 2 2h12c1.1 0 2-.9 2-2V4c0-1.1-.9-2-2-2zm0 14H8V4h12v12zM12 5.5v9l6-4.5z"/></svg>
<svg style="left:33px;top:352px" width="24" height="24" viewBox="0 0 24 24" fill="#fff"><path d="M7 7h10v3l4-4-4-4v3H5v6h2V7zm10 10H7v-3l-4 4 4 4v-3h12v-6h-2v4z"/></svg>
<svg style="left:17px;top:388px" width="24" height="24" viewBox="0 0 24 24" fill="#fff"><path d="M12 14c1.66 0 2.99-1.34 2.99-3L15 5c0-1.66-1.34-3-3-3S9 3.34 9 5v6c0 1.66 1.34 3 3 3zm-1.2-9.1c0-.66.54-1.2 1.2-1.2.66 0 1.2.54 1.2 1.2l-.01 6.2c0 .66-.53 1.2-1.19 1.2-.66 0-1.2-.54-1.2-1.2V4.9zm6.5 6.1c0 3-2.54 5.1-5.3 5.1S6.7 14 6.7 11H5c0 3.41 2.72 6.23 6 6.72V21h2v-3.28c3.28-.48 6-3.3 6-6.72h-1.7z"/></svg>
<svg style="left:17px;top:424px" width="24" height="24" viewBox="0 0 24 24" fill="#fff"><path d="M12 3l.01 10.55c-.59-.34-1.27-.55-2-.55C7.79 13 6 14.79 6 17s1.79 4 4.01 4S14 19.21 14 17V7h4V3h-6zm-1.99 16c-1.1 0-2-.9-2-2s.9-2 2-2 2 .9 2 2-.9 2-2 2z"/></svg>
<svg style="left:17px;top:461px" width="24" height="24" viewBox="0 0 24 24" fill="#fff"><path d="M16.59 8.59L12 13.17 7.41 8.59 6 10l6 6 6-6z"/></svg>

<!-- appbar icons -->
<svg style="left:18px;top:50px;z-index:3" width="24" height="24" viewBox="0 0 24 24" fill="#fff"><path d="M3 18h18v-2H3v2zm0-5h18v-2H3v2zm0-7v2h18V6H3z"/></svg>
<svg style="left:945px;top:50px;z-index:3" width="24" height="24" viewBox="0 0 24 24" fill="#fff"><path d="M17.65 6.35C16.2 4.9 14.21 4 12 4c-4.42 0-7.99 3.58-7.99 8s3.57 8 7.99 8c3.73 0 6.84-2.55 7.73-6h-2.08c-.82 2.33-3.04 4-5.65 4-3.31 0-6-2.690-6-6s2.690-6 6-6c1.66 0 3.14.69 4.22 1.78L13 11h7V4l-2.35 2.35z"/></svg>
<svg style="left:993px;top:52px;z-index:3" width="20" height="20" viewBox="0 0 24 24" fill="none" stroke="#fff" stroke-width="2" stroke-linecap="round" stroke-linejoin="round"><polyline points="22 12 18 12 15 21 9 3 6 12 2 12"/></svg>
<svg style="left:1028px;top:50px;z-index:3" width="24" height="24" viewBox="0 0 24 24" fill="#fff"><path d="M12 2C6.48 2 2 6.48 2 12s4.48 10 10 10 10-4.48 10-10S17.52 2 12 2zm0 3c1.66 0 3 1.34 3 3s-1.34 3-3 3-3-1.34-3-3 1.34-3 3-3zm0 14.2c-2.5 0-4.710-1.28-6-3.22.03-1.99 4-3.08 6-3.08 1.99 0 5.97 1.09 6 3.08-1.29 1.94-3.5 3.22-6 3.22z"/></svg>

<!-- toolbar icons -->
<svg style="left:475px;top:118px" width="24" height="24" viewBox="0 0 24 24" fill="#767676"><path d="M15.5 14h-.79l-.28-.27C15.41 12.59 16 11.11 16 9.5 16 5.91 13.09 3 9.5 3S3 5.91 3 9.5 5.91 16 9.5 16c1.61 0 3.09-.59 4.23-1.57l.27.28v.79l5 4.99L20.49 19l-4.99-5zm-6 0C7.01 14 5 11.99 5 9.5S7.01 5 9.5 5 14 7.01 14 9.5 11.99 14 9.5 14z"/></svg>
<svg style="left:897px;top:123px" width="20" height="20" viewBox="0 0 24 24" fill="#90caf9"><path d="M10 18h4v-2h-4v2zM3 6v2h18V6H3zm3 7h12v-2H6v2z"/></svg>
<svg style="left:1019px;top:122px" width="24" height="24" viewBox="0 0 24 24" fill="#fff"><path d="M12 8c1.1 0 2-.9 2-2s-.9-2-2-2-2 .9-2 2 .9 2 2 2zm0 2c-1.1 0-2 .9-2 2s.9 2 2 2 2-.9 2-2-.9-2-2-2zm0 6c-1.1 0-2 .9-2 2s.9 2 2 2 2-.9 2-2-.9-2-2-2z"/></svg>
<svg style="left:928px;top:446px" width="24" height="24" viewBox="0 0 24 24" fill="#fff"><path d="M7 10l5 5 5-5z"/></svg>


<!-- player icons -->
<svg style="left:0;top:1047px" width="1079" height="80" viewBox="0 1047 1079 80">
<defs>
<clipPath id="pvc"><circle cx="56" cy="1087" r="22"/></clipPath>
<linearGradient id="plab" x1="0" y1="0" x2="1" y2="1"><stop offset="0" stop-color="#1e1e1e"/><stop offset="0.44" stop-color="#3a3a3a"/><stop offset="0.5" stop-color="#9a9a9a"/><stop offset="0.56" stop-color="#3a3a3a"/><stop offset="1" stop-color="#1e1e1e"/></linearGradient>
</defs>
<circle cx="56" cy="1087" r="22" fill="#0b63e8"/>
<g clip-path="url(#pvc)" fill="#5a95ee" opacity="0.8">
<path d="M56 1087L76.3 1068.1L68.3 1063.9z"/>
<path d="M56 1087L35.7 1105.9L43.7 1110.1z"/>
</g>
<circle cx="56" cy="1087" r="7.6" fill="url(#plab)"/>
<rect x="49.5" y="1086" width="4.5" height="1.6" fill="#ddd"/>
<!-- prev -->
<rect x="549" y="1078.5" width="3.5" height="17.5" fill="#fff"/>
<path d="M567.7 1078.5V1096L554.6 1087.25z" fill="#fff"/>
<!-- play -->
<circle cx="607" cy="1087" r="13" fill="#fff"/>
<path d="M603 1081.2Q602.4 1080.6 603.2 1081L613.2 1086.4Q614 1087 613.2 1087.6L603.2 1093Q602.4 1093.4 602.4 1092.6z" fill="#0c0c0c"/>
<!-- next -->
<path d="M646.5 1078.5V1096L659.6 1087.25z" fill="#fff"/>
<rect x="661.2" y="1078.5" width="3.5" height="17.5" fill="#fff"/>
<!-- heart -->
<path d="M698 1094.6L690.6 1087.2C688.4 1085 688.4 1081.6 690.6 1079.8C692.8 1078 696 1078.4 698 1081.2C700 1078.4 703.2 1078 705.4 1079.8C707.6 1081.6 707.6 1085 705.4 1087.2z" fill="none" stroke="#585858" stroke-width="1.9" stroke-linejoin="miter"/>
<!-- volume -->
<path d="M724.6 1085.2Q724.6 1084 725.8 1084H730L737.2 1077.3Q738 1076.8 738 1077.8V1096.2Q738 1097.2 737.2 1096.7L730 1090.2H725.8Q724.6 1090.2 724.6 1089z" fill="#fff"/>
<g fill="none" stroke="#fff" stroke-width="1.6" stroke-linecap="round">
<path d="M740.3 1083.6Q742.6 1087.1 740.3 1090.6"/>
<path d="M743 1080.8Q747.4 1087.1 743 1093.4"/>
<path d="M745.8 1078.2Q752 1087.1 745.8 1096"/>
</g>
<!-- volume slider -->
<rect x="764" y="1085" width="100" height="4" rx="2" fill="#fff"/>
<rect x="764" y="1085" width="70" height="4" rx="2" fill="#5b5fc7"/>
<circle cx="833.6" cy="1087" r="6" fill="#5b5fc7" stroke="#fff" stroke-width="2"/>
<!-- progress -->
<rect x="150" y="1109" width="260" height="4" rx="2" fill="#fff"/>
<circle cx="151" cy="1110.8" r="5.6" fill="#5b5fc7" stroke="#fff" stroke-width="2"/>
<!-- lines -->
<g fill="#fff"><rect x="888" y="1079.5" width="18" height="2"/><rect x="888" y="1083.9" width="18" height="2"/><rect x="888" y="1088" width="18" height="2"/><rect x="888" y="1092.5" width="18" height="2"/></g>
<!-- pill -->
<rect x="931" y="1073" width="60" height="28" rx="14" fill="#0a0a0a" stroke="#161616" stroke-width="1"/>
<path d="M942 1078.8V1088.5L950 1083.65z" fill="#fff"/>
<g fill="#fff"><rect x="952" y="1079.1" width="10" height="2"/><rect x="952" y="1086.1" width="10" height="2"/><rect x="942" y="1093" width="20" height="2"/></g>
<!-- close -->
<path d="M1018.2 1080.1L1031.8 1093.8M1031.8 1080.1L1018.2 1093.8" stroke="#fff" stroke-width="2.1" stroke-linecap="square"/>
</svg>
<div class="t" style="left:972.5px;top:1079px;font-size:16.5px;color:#fff;transform:scaleX(0.85);transform-origin:0 0">2</div>

<div id="sb" class="a"></div>
<div class="a" style="left:0;top:0;width:1px;height:15px;background:#bdbdbd;z-index:5"></div><div class="a" style="left:0;top:15px;width:1px;height:1112px;background:#131313;z-index:5"></div>
<div class="a" style="left:1081px;top:53px;width:9px;height:987px;background:#c1c1c1"></div>
<div class="a" style="left:1080px;top:1112px;width:10px;height:15px;background:#d2d2d2"></div>
<svg style="left:1079px;top:38px" width="11" height="1089" viewBox="1079 38 11 1089">
<path d="M1083 47.7L1086.5 43.7L1090 47.7z" fill="#a3a3a3"/>
<path d="M1083 1117L1090 1117L1086.5 1121z" fill="#505050"/>
</svg>
</body></html>
